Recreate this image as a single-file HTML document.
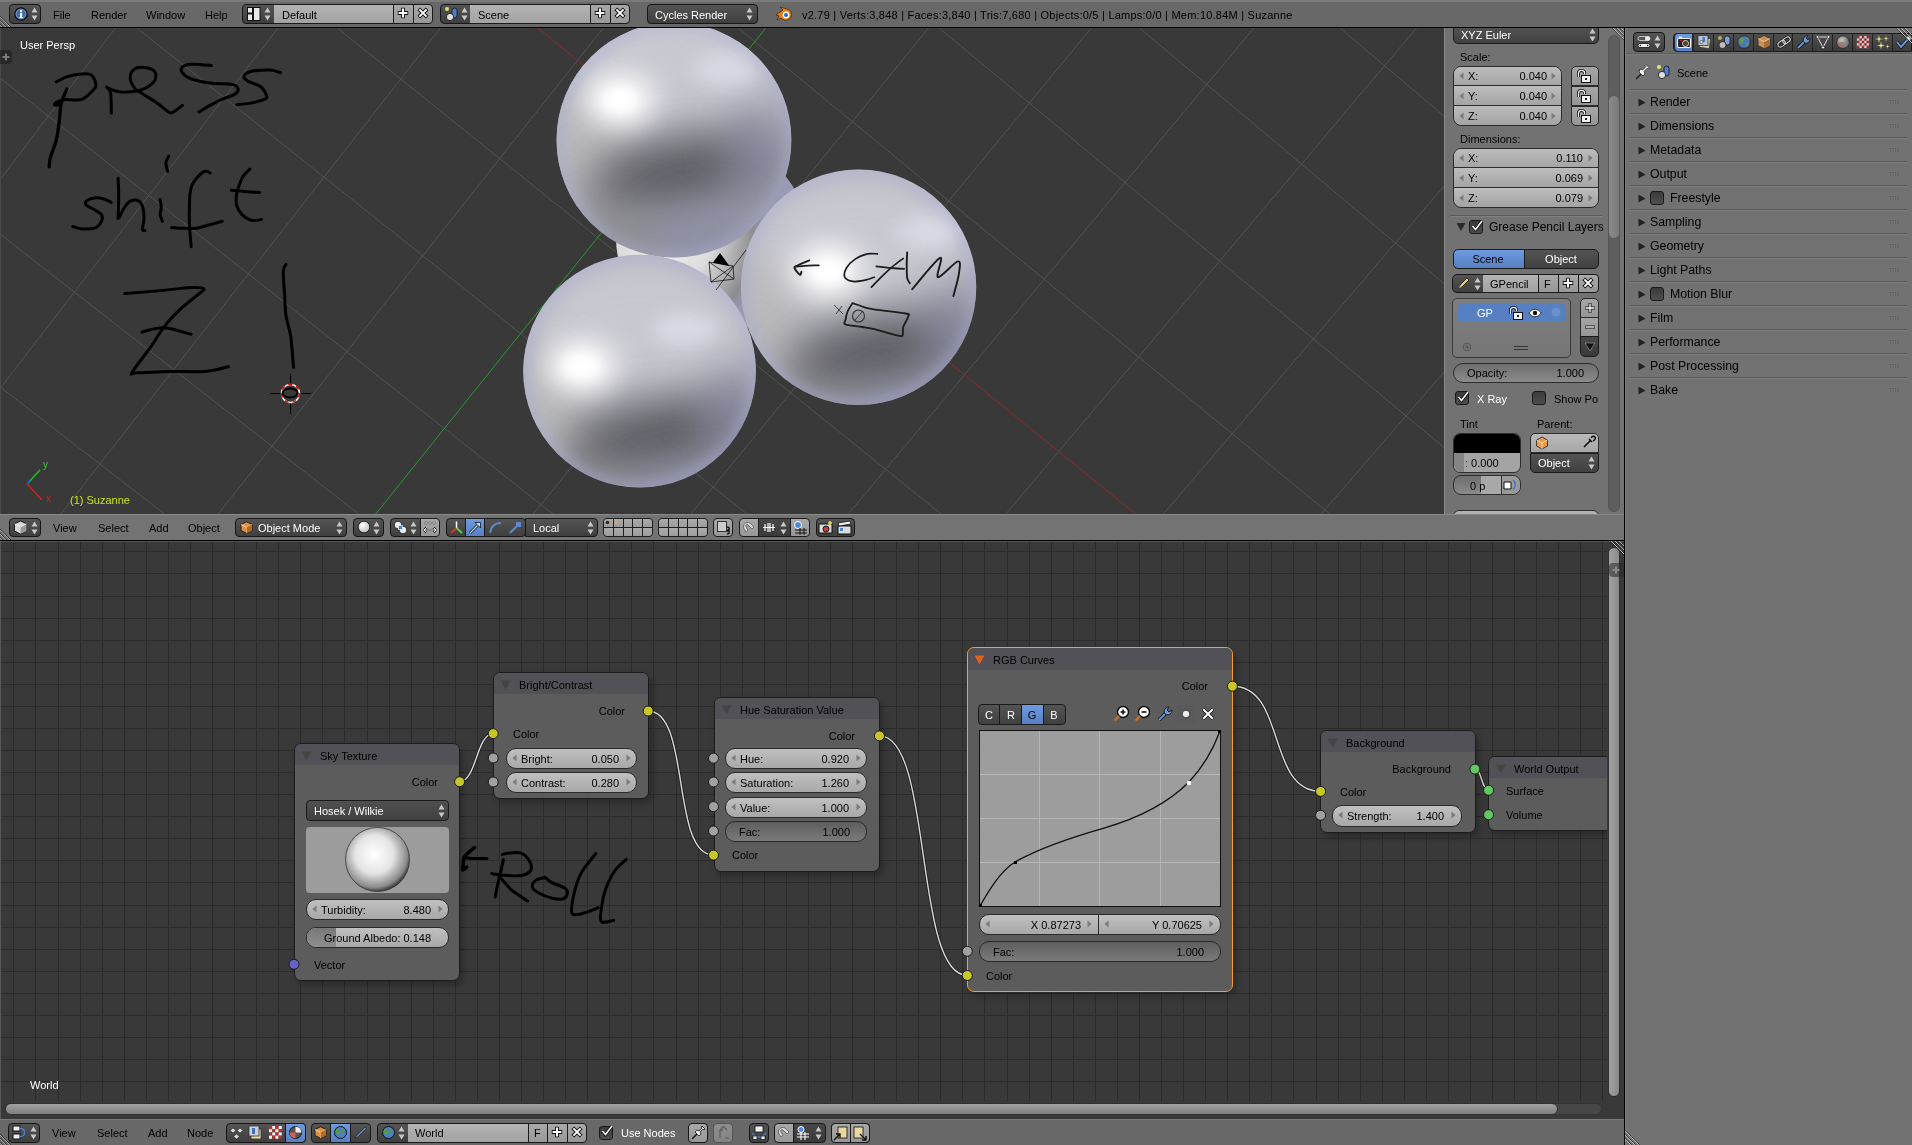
<!DOCTYPE html><html><head><meta charset="utf-8"><style>
*{margin:0;padding:0;box-sizing:border-box}
html,body{width:1912px;height:1145px;overflow:hidden;background:#727272}
body{position:relative;-webkit-font-smoothing:antialiased;font-family:"Liberation Sans",sans-serif;font-size:11px}
div{position:absolute}
.t{white-space:pre;line-height:12px;will-change:transform}
svg{position:absolute;overflow:visible}
.dk{background:linear-gradient(#535353,#414141);border:1px solid #1a1a1a;border-radius:4px}
.lt{background:linear-gradient(#b9b9b9,#a5a5a5);border:1px solid #1a1a1a}
.sl{background:linear-gradient(#bcbcbc,#a9a9a9);border:1px solid #2e2e2e;border-radius:10px}
.sld{background:linear-gradient(#6d6d6d,#888888);border:1px solid #2e2e2e;border-radius:10px}
</style></head><body><div style="left:0px;top:28px;width:1444px;height:486px;background:#393939;overflow:hidden"></div>
<svg style="position:absolute;left:0;top:0" width="1444" height="1145"><defs><clipPath id="vc"><rect x="0" y="28" width="1444" height="486"/></clipPath></defs><g clip-path="url(#vc)"><g stroke="#535353" stroke-width="1"><line x1="-3006.1" y1="1877.2" x2="1427.2" y2="-5116.6"/><line x1="-2903.3" y1="1939.3" x2="1552.3" y2="-4974.6"/><line x1="-2801.4" y1="2000.9" x2="1675.7" y2="-4834.7"/><line x1="-2700.5" y1="2062.0" x2="1797.4" y2="-4696.6"/><line x1="-2600.4" y1="2122.5" x2="1917.5" y2="-4560.3"/><line x1="-2501.3" y1="2182.5" x2="2036.0" y2="-4425.9"/><line x1="-2403.0" y1="2241.9" x2="2152.9" y2="-4293.3"/><line x1="-2305.6" y1="2300.9" x2="2268.3" y2="-4162.4"/><line x1="-2209.0" y1="2359.3" x2="2382.2" y2="-4033.2"/><line x1="-2113.3" y1="2417.1" x2="2494.6" y2="-3905.7"/><line x1="-2018.4" y1="2474.5" x2="2605.6" y2="-3779.8"/><line x1="-1924.3" y1="2531.4" x2="2715.1" y2="-3655.6"/><line x1="-1831.1" y1="2587.8" x2="2823.2" y2="-3532.9"/><line x1="-1738.6" y1="2643.7" x2="2930.0" y2="-3411.8"/><line x1="-1647.0" y1="2699.2" x2="3035.4" y2="-3292.2"/><line x1="-1556.1" y1="2754.1" x2="3139.5" y2="-3174.1"/><line x1="-1376.6" y1="2862.7" x2="3343.9" y2="-2942.3"/><line x1="-1288.0" y1="2916.3" x2="3444.2" y2="-2828.5"/><line x1="-1200.2" y1="2969.4" x2="3543.3" y2="-2716.1"/><line x1="-1113.1" y1="3022.1" x2="3641.1" y2="-2605.1"/><line x1="-1026.7" y1="3074.4" x2="3737.8" y2="-2495.4"/><line x1="-941.0" y1="3126.2" x2="3833.4" y2="-2387.0"/><line x1="-856.0" y1="3177.6" x2="3927.8" y2="-2279.9"/><line x1="-771.7" y1="3228.6" x2="4021.1" y2="-2174.1"/><line x1="-688.1" y1="3279.1" x2="4113.3" y2="-2069.5"/><line x1="-605.2" y1="3329.3" x2="4204.4" y2="-1966.2"/><line x1="-523.0" y1="3379.0" x2="4294.4" y2="-1864.0"/><line x1="-441.4" y1="3428.3" x2="4383.4" y2="-1763.0"/><line x1="-360.5" y1="3477.3" x2="4471.4" y2="-1663.2"/><line x1="-280.2" y1="3525.8" x2="4558.4" y2="-1564.5"/><line x1="-200.5" y1="3574.0" x2="4644.4" y2="-1467.0"/><line x1="-121.5" y1="3621.8" x2="4729.4" y2="-1370.5"/><line x1="-43.2" y1="3669.2" x2="4813.5" y2="-1275.2"/><line x1="34.6" y1="3716.2" x2="4896.6" y2="-1180.9"/><line x1="111.7" y1="3762.9" x2="4978.8" y2="-1087.6"/><line x1="188.3" y1="3809.2" x2="5060.1" y2="-995.4"/><line x1="-4598.0" y1="-320.6" x2="1247.1" y2="3511.8"/><line x1="-4551.6" y1="-425.0" x2="1311.6" y2="3451.8"/><line x1="-4504.5" y1="-530.8" x2="1376.9" y2="3391.3"/><line x1="-4456.9" y1="-638.1" x2="1442.7" y2="3330.2"/><line x1="-4408.6" y1="-746.7" x2="1509.3" y2="3268.4"/><line x1="-4359.6" y1="-856.9" x2="1576.5" y2="3206.0"/><line x1="-4310.0" y1="-968.6" x2="1644.4" y2="3143.0"/><line x1="-4259.6" y1="-1081.8" x2="1713.1" y2="3079.3"/><line x1="-4208.6" y1="-1196.6" x2="1782.4" y2="3014.9"/><line x1="-4156.9" y1="-1313.0" x2="1852.5" y2="2949.9"/><line x1="-4104.4" y1="-1431.1" x2="1923.3" y2="2884.2"/><line x1="-4051.2" y1="-1550.8" x2="1994.8" y2="2817.8"/><line x1="-3997.2" y1="-1672.2" x2="2067.1" y2="2750.7"/><line x1="-3942.5" y1="-1795.4" x2="2140.2" y2="2682.8"/><line x1="-3887.0" y1="-1920.4" x2="2214.1" y2="2614.3"/><line x1="-3830.6" y1="-2047.2" x2="2288.8" y2="2545.0"/><line x1="-3773.4" y1="-2175.8" x2="2364.3" y2="2474.9"/><line x1="-3715.4" y1="-2306.4" x2="2440.6" y2="2404.1"/><line x1="-3656.5" y1="-2438.9" x2="2517.7" y2="2332.5"/><line x1="-3596.7" y1="-2573.4" x2="2595.7" y2="2260.1"/><line x1="-3536.0" y1="-2710.0" x2="2674.6" y2="2186.9"/><line x1="-3474.4" y1="-2848.6" x2="2754.3" y2="2112.9"/><line x1="-3411.9" y1="-2989.4" x2="2835.0" y2="2038.1"/><line x1="-3283.8" y1="-3277.5" x2="2999.0" y2="1885.8"/><line x1="-3218.2" y1="-3425.0" x2="3082.5" y2="1808.4"/><line x1="-3151.7" y1="-3574.8" x2="3166.8" y2="1730.1"/><line x1="-3084.0" y1="-3727.1" x2="3252.2" y2="1650.9"/><line x1="-3015.3" y1="-3881.7" x2="3338.6" y2="1570.7"/><line x1="-2945.4" y1="-4038.9" x2="3425.9" y2="1489.6"/><line x1="-2874.4" y1="-4198.7" x2="3514.3" y2="1407.6"/><line x1="-2802.2" y1="-4361.1" x2="3603.8" y2="1324.6"/><line x1="-2728.8" y1="-4526.3" x2="3694.3" y2="1240.6"/><line x1="-2654.2" y1="-4694.2" x2="3785.8" y2="1155.6"/><line x1="-2578.3" y1="-4864.9" x2="3878.5" y2="1069.6"/><line x1="-2501.1" y1="-5038.6" x2="3972.3" y2="982.5"/><line x1="-2422.6" y1="-5215.3" x2="4067.3" y2="894.4"/><line x1="-2342.7" y1="-5395.1" x2="4163.4" y2="805.2"/><line x1="-2261.4" y1="-5578.0" x2="4260.7" y2="714.9"/><line x1="-2178.7" y1="-5764.1" x2="4359.2" y2="623.4"/><line x1="-2094.4" y1="-5953.6" x2="4459.0" y2="530.9"/><line x1="-2008.7" y1="-6146.5" x2="4560.0" y2="437.1"/><line x1="-1921.4" y1="-6342.9" x2="4662.3" y2="342.2"/><line x1="-1832.5" y1="-6542.9" x2="4765.9" y2="246.1"/><line x1="-1742.0" y1="-6746.7" x2="4870.8" y2="148.7"/></g><line x1="-3348.3" y1="-3132.3" x2="2916.6" y2="1962.4" stroke="#902828"/><line x1="-1466.0" y1="2808.6" x2="3242.3" y2="-3057.5" stroke="#2a9a2a"/><defs><radialGradient id="s4" cx="665" cy="238" r="105" gradientUnits="userSpaceOnUse">
<stop offset="0" stop-color="#f4f4f4"/><stop offset="0.45" stop-color="#dcdcdc"/><stop offset="0.85" stop-color="#8c8c90"/><stop offset="1" stop-color="#9a9ab8"/></radialGradient></defs>
<circle cx="712" cy="238" r="96" fill="url(#s4)"/><defs><filter id="bl1_12" x="-100%" y="-100%" width="300%" height="300%"><feGaussianBlur stdDeviation="14.1"/></filter><filter id="bl1_22" x="-100%" y="-100%" width="300%" height="300%"><feGaussianBlur stdDeviation="25.9"/></filter><filter id="bl1_20" x="-100%" y="-100%" width="300%" height="300%"><feGaussianBlur stdDeviation="23.5"/></filter><filter id="bl1_8" x="-100%" y="-100%" width="300%" height="300%"><feGaussianBlur stdDeviation="9.4"/></filter><filter id="bl1_18" x="-100%" y="-100%" width="300%" height="300%"><feGaussianBlur stdDeviation="21.1"/></filter><filter id="bl1_5" x="-100%" y="-100%" width="300%" height="300%"><feGaussianBlur stdDeviation="5.9"/></filter><clipPath id="cp1"><circle cx="674" cy="140" r="117.5"/></clipPath></defs><g clip-path="url(#cp1)"><circle cx="674" cy="140" r="117.5" fill="#a6a6ae"/><ellipse cx="674.0" cy="66.0" rx="129.2" ry="88.1" fill="#c8c8d0" opacity="1" filter="url(#bl1_22)"/><ellipse cx="574.1" cy="165.8" rx="41.1" ry="82.2" fill="#bcbcbe" opacity="0.9" filter="url(#bl1_18)"/><ellipse cx="674.0" cy="175.2" rx="88.1" ry="37.6" fill="#5c5c62" opacity="1" transform="rotate(-14 674.0 175.2)" filter="url(#bl1_20)"/><ellipse cx="756.2" cy="154.1" rx="29.4" ry="52.9" fill="#7c7e96" opacity="0.7" filter="url(#bl1_18)"/><ellipse cx="627.0" cy="236.4" rx="58.8" ry="35.2" fill="#8e8e92" opacity="0.8" filter="url(#bl1_18)"/><ellipse cx="709.2" cy="236.4" rx="58.8" ry="35.2" fill="#8a8ca4" opacity="0.8" filter="url(#bl1_18)"/><ellipse cx="725.7" cy="69.5" rx="32.9" ry="16.5" fill="#dcdce8" opacity="0.9" filter="url(#bl1_8)"/><ellipse cx="620.0" cy="100.0" rx="35.2" ry="25.9" fill="#ffffff" opacity="1" filter="url(#bl1_12)"/><ellipse cx="620.0" cy="100.0" rx="16.5" ry="11.8" fill="#ffffff" opacity="1" filter="url(#bl1_5)"/><circle cx="674" cy="140" r="117.5" fill="none" stroke="#a8acd4" stroke-width="14.1" opacity="0.4" filter="url(#bl1_5)"/></g><defs><filter id="bl2_12" x="-100%" y="-100%" width="300%" height="300%"><feGaussianBlur stdDeviation="14.0"/></filter><filter id="bl2_22" x="-100%" y="-100%" width="300%" height="300%"><feGaussianBlur stdDeviation="25.6"/></filter><filter id="bl2_20" x="-100%" y="-100%" width="300%" height="300%"><feGaussianBlur stdDeviation="23.3"/></filter><filter id="bl2_8" x="-100%" y="-100%" width="300%" height="300%"><feGaussianBlur stdDeviation="9.3"/></filter><filter id="bl2_18" x="-100%" y="-100%" width="300%" height="300%"><feGaussianBlur stdDeviation="21.0"/></filter><filter id="bl2_5" x="-100%" y="-100%" width="300%" height="300%"><feGaussianBlur stdDeviation="5.8"/></filter><clipPath id="cp2"><circle cx="639.6" cy="371.1" r="116.4"/></clipPath></defs><g clip-path="url(#cp2)"><circle cx="639.6" cy="371.1" r="116.4" fill="#a6a6ae"/><ellipse cx="639.6" cy="330.4" rx="128.0" ry="87.3" fill="#c8c8d0" opacity="1" filter="url(#bl2_22)"/><ellipse cx="540.7" cy="429.3" rx="40.7" ry="81.5" fill="#bcbcbe" opacity="0.9" filter="url(#bl2_18)"/><ellipse cx="651.2" cy="438.6" rx="87.3" ry="37.2" fill="#5c5c62" opacity="1" transform="rotate(-14 651.2 438.6)" filter="url(#bl2_20)"/><ellipse cx="732.7" cy="417.7" rx="29.1" ry="52.4" fill="#7c7e96" opacity="0.7" filter="url(#bl2_18)"/><ellipse cx="604.7" cy="499.1" rx="58.2" ry="34.9" fill="#8e8e92" opacity="0.8" filter="url(#bl2_18)"/><ellipse cx="686.2" cy="499.1" rx="58.2" ry="34.9" fill="#8a8ca4" opacity="0.8" filter="url(#bl2_18)"/><ellipse cx="685.0" cy="329.2" rx="32.6" ry="16.3" fill="#dcdce8" opacity="0.9" filter="url(#bl2_8)"/><ellipse cx="581.4" cy="366.4" rx="34.9" ry="25.6" fill="#ffffff" opacity="1" filter="url(#bl2_12)"/><ellipse cx="581.4" cy="366.4" rx="16.3" ry="11.6" fill="#ffffff" opacity="1" filter="url(#bl2_5)"/><circle cx="639.6" cy="371.1" r="116.4" fill="none" stroke="#a8acd4" stroke-width="14.0" opacity="0.4" filter="url(#bl2_5)"/></g><g stroke="#000" stroke-width="1.2" fill="none"><path d="M709,262 L733,266 L734,279 L711,282 Z M709,262 L734,279 M733,266 L711,282 M716,290 L746,250" stroke-width="0.7"/><path d="M714,262 L720,254 L728,265 Z" fill="#000"/></g><defs><filter id="bl3_12" x="-100%" y="-100%" width="300%" height="300%"><feGaussianBlur stdDeviation="14.1"/></filter><filter id="bl3_22" x="-100%" y="-100%" width="300%" height="300%"><feGaussianBlur stdDeviation="25.9"/></filter><filter id="bl3_20" x="-100%" y="-100%" width="300%" height="300%"><feGaussianBlur stdDeviation="23.5"/></filter><filter id="bl3_8" x="-100%" y="-100%" width="300%" height="300%"><feGaussianBlur stdDeviation="9.4"/></filter><filter id="bl3_18" x="-100%" y="-100%" width="300%" height="300%"><feGaussianBlur stdDeviation="21.2"/></filter><filter id="bl3_5" x="-100%" y="-100%" width="300%" height="300%"><feGaussianBlur stdDeviation="5.9"/></filter><clipPath id="cp3"><circle cx="858.6" cy="287.2" r="117.7"/></clipPath></defs><g clip-path="url(#cp3)"><circle cx="858.6" cy="287.2" r="117.7" fill="#a6a6ae"/><ellipse cx="858.6" cy="246.0" rx="129.5" ry="88.3" fill="#c8c8d0" opacity="1" filter="url(#bl3_22)"/><ellipse cx="758.6" cy="346.1" rx="41.2" ry="82.4" fill="#bcbcbe" opacity="0.9" filter="url(#bl3_18)"/><ellipse cx="872.7" cy="355.5" rx="88.3" ry="37.7" fill="#5c5c62" opacity="1" transform="rotate(-14 872.7 355.5)" filter="url(#bl3_20)"/><ellipse cx="955.1" cy="334.3" rx="29.4" ry="53.0" fill="#7c7e96" opacity="0.7" filter="url(#bl3_18)"/><ellipse cx="825.6" cy="416.7" rx="58.9" ry="35.3" fill="#8e8e92" opacity="0.8" filter="url(#bl3_18)"/><ellipse cx="908.0" cy="416.7" rx="58.9" ry="35.3" fill="#8a8ca4" opacity="0.8" filter="url(#bl3_18)"/><ellipse cx="929.2" cy="231.9" rx="33.0" ry="16.5" fill="#dcdce8" opacity="0.9" filter="url(#bl3_8)"/><ellipse cx="828.0" cy="270.7" rx="35.3" ry="25.9" fill="#ffffff" opacity="1" filter="url(#bl3_12)"/><ellipse cx="828.0" cy="270.7" rx="16.5" ry="11.8" fill="#ffffff" opacity="1" filter="url(#bl3_5)"/><circle cx="858.6" cy="287.2" r="117.7" fill="none" stroke="#a8acd4" stroke-width="14.1" opacity="0.4" filter="url(#bl3_5)"/></g><path d="M56.3,81.8 C58.2,80.9 63.2,77.9 67.5,76.6 C71.7,75.3 77.8,74.2 81.8,74.0 C85.9,73.7 89.3,73.4 91.6,75.3 C94.0,77.1 95.9,82.5 96.0,85.1 C96.1,87.7 94.4,88.7 92.3,91.0 C90.2,93.2 86.0,97.3 83.1,98.8 C80.3,100.3 78.4,100.0 75.3,100.1 C72.3,100.2 68.1,99.0 64.8,99.5 C61.6,99.9 57.3,101.7 55.7,102.7 C54.1,103.7 54.4,105.1 55.0,105.3 C55.7,105.6 58.9,104.3 59.6,104.0" stroke="#000" stroke-width="3.0" fill="none" stroke-linecap="round" stroke-linejoin="round"/><path d="M66.8,89.0 C66.3,90.3 64.5,94.2 63.5,96.8 C62.6,99.5 61.6,100.8 60.9,104.7 C60.2,108.6 60.1,114.5 59.4,120.4 C58.6,126.3 57.8,133.9 56.3,140.0 C54.9,146.1 51.7,152.5 50.5,157.0 C49.3,161.5 49.4,165.2 49.2,166.8" stroke="#000" stroke-width="3.3" fill="none" stroke-linecap="round" stroke-linejoin="round"/><path d="M106.7,87.0 C107.3,88.0 109.8,88.6 110.6,92.9 C111.4,97.3 111.2,109.8 111.3,113.2" stroke="#000" stroke-width="3.0" fill="none" stroke-linecap="round" stroke-linejoin="round"/><path d="M108.0,88.3 C110.0,88.9 114.9,91.4 119.8,91.9 C124.7,92.3 132.6,91.9 137.4,91.0 C142.2,90.0 145.6,88.2 148.5,86.4 C151.5,84.5 154.1,82.3 155.1,79.8 C156.0,77.3 156.2,73.4 154.4,71.3 C152.7,69.3 148.0,67.7 144.6,67.4 C141.2,67.1 136.5,67.5 134.1,69.4 C131.7,71.2 130.0,75.3 130.2,78.5 C130.4,81.8 133.3,86.4 135.4,89.0 C137.6,91.6 139.6,91.8 143.3,94.2 C147.0,96.6 153.3,100.3 157.7,103.4 C162.0,106.4 166.6,111.2 169.4,112.5 C172.3,113.8 172.5,112.4 174.7,111.2 C176.9,110.0 181.2,106.3 182.5,105.3" stroke="#000" stroke-width="3.0" fill="none" stroke-linecap="round" stroke-linejoin="round"/><path d="M211.3,65.5 C208.0,65.2 196.5,63.9 191.7,64.2 C186.9,64.4 184.2,65.5 182.5,66.8 C180.9,68.1 180.6,70.0 181.9,72.0 C183.2,74.0 185.7,76.7 190.4,78.5 C195.1,80.4 203.0,82.1 210.0,83.1 C217.0,84.1 227.5,83.4 232.2,84.4 C236.9,85.4 237.7,87.4 238.1,89.0 C238.5,90.6 237.5,92.5 234.8,94.2 C232.1,96.0 225.9,97.6 221.7,99.5 C217.6,101.3 213.8,103.3 210.0,105.3 C206.2,107.4 200.7,110.8 198.9,111.9" stroke="#000" stroke-width="3.0" fill="none" stroke-linecap="round" stroke-linejoin="round"/><path d="M280.6,72.7 C278.8,72.2 274.9,70.3 270.1,70.0 C265.3,69.8 256.2,70.4 251.8,71.3 C247.5,72.3 244.6,74.3 244.0,75.9 C243.3,77.6 245.1,79.3 247.9,81.2 C250.7,83.0 257.8,84.4 261.0,87.0 C264.1,89.6 266.6,94.7 266.9,96.8 C267.1,99.0 265.2,99.0 262.3,100.1 C259.3,101.2 253.5,102.6 249.2,103.4 C245.0,104.1 238.9,104.5 236.8,104.7" stroke="#000" stroke-width="3.0" fill="none" stroke-linecap="round" stroke-linejoin="round"/><path d="M111.2,202.4 C110.0,201.8 106.3,199.7 103.7,198.9 C101.1,198.1 98.4,197.5 95.7,197.8 C92.9,198.0 88.7,199.5 87.0,200.6 C85.4,201.8 84.6,203.1 85.9,204.7 C87.1,206.2 91.9,208.2 94.5,209.8 C97.1,211.5 100.3,212.5 101.4,214.4 C102.6,216.4 102.6,219.0 101.4,221.3 C100.3,223.6 98.0,227.0 94.5,228.2 C91.1,229.5 84.4,229.1 80.7,228.8 C77.1,228.5 74.0,226.9 72.7,226.5" stroke="#000" stroke-width="3.0" fill="none" stroke-linecap="round" stroke-linejoin="round"/><path d="M118.1,178.2 C118.2,181.2 118.7,189.3 118.7,196.0 C118.7,202.7 118.2,214.7 118.1,218.5" stroke="#000" stroke-width="3.0" fill="none" stroke-linecap="round" stroke-linejoin="round"/><path d="M119.3,217.3 C120.1,215.7 122.6,210.2 124.4,207.5 C126.3,204.8 127.9,202.4 130.2,201.2 C132.5,200.1 136.1,199.6 138.2,200.6 C140.4,201.7 141.9,204.5 142.8,207.5 C143.8,210.6 144.1,215.4 144.0,219.0 C143.9,222.7 142.1,227.5 142.3,229.4 C142.5,231.3 144.7,230.4 145.1,230.5" stroke="#000" stroke-width="3.0" fill="none" stroke-linecap="round" stroke-linejoin="round"/><path d="M168.7,156.3 C168.3,157.4 166.0,160.2 165.9,162.7 C165.7,165.1 167.3,169.8 167.6,171.3" stroke="#000" stroke-width="3.0" fill="none" stroke-linecap="round" stroke-linejoin="round"/><path d="M160.1,199.5 C160.3,200.8 161.3,205.0 161.3,207.5 C161.3,210.0 159.9,212.1 160.1,214.4 C160.3,216.7 162.0,220.2 162.4,221.3" stroke="#000" stroke-width="3.0" fill="none" stroke-linecap="round" stroke-linejoin="round"/><path d="M210.2,173.0 C209.3,172.7 207.0,170.7 205.0,171.3 C203.0,171.9 200.2,174.3 198.1,176.5 C196.0,178.7 193.7,181.6 192.3,184.5 C191.0,187.4 190.5,189.9 190.0,193.7 C189.5,197.6 189.5,202.4 189.4,207.5 C189.3,212.7 189.2,218.3 189.4,224.8 C189.7,231.3 190.9,243.0 191.2,246.7" stroke="#000" stroke-width="3.0" fill="none" stroke-linecap="round" stroke-linejoin="round"/><path d="M171.6,227.7 C173.1,227.8 176.8,228.1 180.8,228.2 C184.8,228.3 191.0,228.8 195.8,228.2 C200.6,227.7 205.2,225.9 209.6,224.8 C214.0,223.6 220.1,221.9 222.2,221.3" stroke="#000" stroke-width="3.0" fill="none" stroke-linecap="round" stroke-linejoin="round"/><path d="M249.9,169.0 C248.7,170.2 244.7,173.9 242.9,176.5 C241.2,179.1 240.6,181.6 239.5,184.5 C238.4,187.4 237.1,190.3 236.6,193.7 C236.1,197.2 235.8,201.8 236.6,205.2 C237.5,208.7 239.4,211.9 241.8,214.4 C244.2,216.9 247.7,219.3 251.0,220.2 C254.3,221.1 259.6,219.7 261.4,219.6" stroke="#000" stroke-width="3.0" fill="none" stroke-linecap="round" stroke-linejoin="round"/><path d="M231.4,190.3 C233.6,190.5 239.4,191.0 244.1,191.4 C248.8,191.8 257.0,192.4 259.6,192.6" stroke="#000" stroke-width="3.0" fill="none" stroke-linecap="round" stroke-linejoin="round"/><path d="M124.9,293.6 C130.3,293.1 146.3,291.9 157.4,290.9 C168.4,289.9 183.4,287.8 191.2,287.5 C199.0,287.2 203.2,287.5 204.1,288.8 C205.0,290.2 200.6,292.2 196.7,295.6 C192.7,299.0 185.8,304.0 180.4,309.2 C175.0,314.3 169.1,320.4 164.2,326.8 C159.2,333.1 155.9,339.5 150.6,347.1 C145.3,354.6 134.6,367.8 132.3,372.1 C130.1,376.4 130.6,372.9 137.1,372.8 C143.5,372.7 159.6,371.7 170.9,371.4 C182.2,371.2 195.2,372.2 204.8,371.4 C214.4,370.6 224.5,367.5 228.5,366.7" stroke="#000" stroke-width="3.0" fill="none" stroke-linecap="round" stroke-linejoin="round"/><path d="M141.8,332.2 C144.0,331.6 150.5,329.5 154.7,328.8 C158.9,328.1 160.8,327.2 166.9,328.1 C173.0,329.0 187.2,333.2 191.2,334.2" stroke="#000" stroke-width="3.0" fill="none" stroke-linecap="round" stroke-linejoin="round"/><path d="M286.0,264.5 C285.6,265.6 283.5,266.1 283.3,271.2 C283.1,276.4 284.2,288.2 284.7,295.6 C285.1,303.1 285.0,309.2 286.0,315.9 C287.0,322.7 289.5,327.7 290.7,336.2 C292.0,344.8 293.0,362.2 293.5,367.4" stroke="#000" stroke-width="3.0" fill="none" stroke-linecap="round" stroke-linejoin="round"/><path d="M818.8,265.3 C816.4,265.4 808.8,265.6 804.8,265.8 C800.9,266.1 796.6,266.7 794.9,266.8" stroke="#1c1c1c" stroke-width="1.7" fill="none" stroke-linecap="round" stroke-linejoin="round"/><path d="M809.3,260.4 C807.4,261.2 800.4,264.1 797.9,265.3 C795.4,266.6 794.1,266.3 794.4,267.8 C794.7,269.4 798.7,274.1 799.9,274.8 C801.0,275.4 801.1,272.3 801.4,271.8" stroke="#1c1c1c" stroke-width="1.9" fill="none" stroke-linecap="round" stroke-linejoin="round"/><path d="M877.4,253.9 C875.7,253.9 871.1,253.1 867.4,253.9 C863.8,254.7 859.0,256.6 855.5,258.9 C852.0,261.2 848.4,264.8 846.6,267.8 C844.8,270.8 843.8,274.5 844.6,276.8 C845.4,279.0 848.6,280.6 851.5,281.2 C854.5,281.9 858.7,281.4 862.5,280.7 C866.3,280.1 872.4,277.8 874.4,277.3" stroke="#1c1c1c" stroke-width="1.7" fill="none" stroke-linecap="round" stroke-linejoin="round"/><path d="M871.4,287.2 C873.1,285.5 877.9,280.2 881.4,276.8 C884.8,273.4 888.6,269.9 892.3,266.8 C895.9,263.8 901.4,259.8 903.2,258.4" stroke="#1c1c1c" stroke-width="1.7" fill="none" stroke-linecap="round" stroke-linejoin="round"/><path d="M876.4,266.3 C878.5,266.6 884.7,267.4 889.3,267.8 C893.9,268.2 901.7,268.7 904.2,268.8" stroke="#1c1c1c" stroke-width="1.7" fill="none" stroke-linecap="round" stroke-linejoin="round"/><path d="M907.2,252.4 C907.1,254.5 906.7,260.6 906.7,264.8 C906.7,269.1 906.7,274.7 907.2,277.8 C907.7,280.8 909.3,282.3 909.7,283.2" stroke="#1c1c1c" stroke-width="1.9" fill="none" stroke-linecap="round" stroke-linejoin="round"/><path d="M912.2,289.2 C916.8,284.0 935.7,259.9 940.0,257.9 C944.3,255.9 935.0,276.7 938.0,277.3 C941.0,277.8 954.4,261.9 957.9,261.4 C961.4,260.8 959.6,268.0 958.9,273.8 C958.1,279.6 954.3,292.4 953.4,296.1" stroke="#1c1c1c" stroke-width="1.9" fill="none" stroke-linecap="round" stroke-linejoin="round"/><path d="M852.5,303.1 C854.7,303.8 861.7,306.5 865.5,307.6 C869.3,308.7 868.7,308.6 875.4,309.6 C882.1,310.6 900.2,312.4 905.7,313.5 C911.2,314.7 908.6,314.3 908.2,316.5 C907.8,318.8 904.2,323.7 903.2,327.0 C902.2,330.2 903.9,334.7 902.2,335.9 C900.6,337.1 897.8,335.5 893.3,334.4 C888.8,333.3 880.5,330.7 875.4,329.4 C870.3,328.2 867.4,327.8 862.5,327.0 C857.5,326.1 848.4,325.7 845.6,324.5 C842.8,323.2 845.3,321.7 845.6,319.5 C845.9,317.3 846.4,314.3 847.6,311.5 C848.7,308.8 851.7,304.5 852.5,303.1" stroke="#1c1c1c" stroke-width="1.8" fill="none" stroke-linecap="round" stroke-linejoin="round"/><circle cx="858.5" cy="316" r="6" stroke="#333" stroke-width="1.1" fill="none"/><path d="M855,320 L862,312 M834,305 L843,314 M836,314 L842,306" stroke="#333" stroke-width="0.9"/><g><path d="M270,393.5 L282,393.5 M299,393.5 L311,393.5 M290.5,374 L290.5,385 M290.5,402 L290.5,414" stroke="#000" stroke-width="1"/><circle cx="290.5" cy="393.5" r="9" stroke="#ffffff" stroke-width="1.5" fill="none"/><circle cx="290.5" cy="393.5" r="9" stroke="#e00000" stroke-width="1.5" fill="none" stroke-dasharray="4 4"/><ellipse cx="290" cy="393" rx="7.5" ry="4.5" stroke="#000" stroke-width="2" fill="none"/></g></g></svg>
<div class="t" style="left:20px;top:39px;color:#ffffff;font-size:11px;">User Persp</div>
<div class="t" style="left:70px;top:494px;color:#c8e020;font-size:11px;">(1) Suzanne</div>
<div style="left:0px;top:28px;width:1px;height:486px;background:#4a4a4a"></div>
<div style="left:0px;top:50px;width:12px;height:14px;background:rgba(30,30,30,0.6);border-radius:0 4px 4px 0"></div>
<svg style="position:absolute;left:2px;top:53px;" width="8" height="8" viewBox="0 0 8 8"><path d="M4,0.5 V7.5 M0.5,4 H7.5" stroke="#7a7a7a" stroke-width="2"/></svg>
<svg style="position:absolute;left:0px;top:0px;" width="60" height="520" viewBox="0 0 60 520"><path d="M27,484 L42,500" stroke="#d02020" stroke-width="1.5"/><path d="M27,484 L40,470" stroke="#20c020" stroke-width="1.5"/><path d="M27,484 L29,480" stroke="#2040e0" stroke-width="1.5"/><text x="46" y="502" fill="#d02020" font-size="10" font-family="Liberation Sans">x</text><text x="43" y="468" fill="#30d030" font-size="10" font-family="Liberation Sans">y</text></svg>
<div style="left:1444px;top:28px;width:180px;height:486px;background:#727272;border-left:1px solid #8a8a8a"></div>
<div style="left:1444px;top:28px;width:180px;height:486px;overflow:hidden"></div>
<div style="left:1453px;top:24px;width:146px;height:20px;background:linear-gradient(#545454,#424242);border:1px solid #1a1a1a;border-radius:5px"></div>
<div style="left:1444px;top:24px;width:180px;height:4px;background:#727272"></div>
<div class="t" style="left:1461px;top:29px;color:#fff;font-size:11px;">XYZ Euler</div>
<svg style="position:absolute;left:1589px;top:28px;" width="7" height="14" viewBox="0 0 7 14"><path d="M0.5,5.5 L3.5,0.5 L6.5,5.5 Z M0.5,8.5 L3.5,13.5 L6.5,8.5 Z" fill="#c8c8c8"/></svg>
<div class="t" style="left:1460px;top:51px;color:#000;font-size:11px;">Scale:</div>
<div style="left:1453px;top:66px;width:109px;height:60px;background:#a4a4a4;border:1px solid #2a2a2a;border-radius:8px;overflow:hidden"></div>
<div style="left:1454px;top:67px;width:107px;height:19px;background:linear-gradient(#bdbdbd,#a4a4a4);border-radius:7px 7px 0 0;"></div>
<svg style="position:absolute;left:1459px;top:72px;" width="5" height="8" viewBox="0 0 5 8"><path d="M4.5,0.5 L0.5,4 L4.5,7.5 Z" fill="#7a7a7a"/></svg>
<svg style="position:absolute;left:1551px;top:72px;" width="5" height="8" viewBox="0 0 5 8"><path d="M0.5,0.5 L4.5,4 L0.5,7.5 Z" fill="#7a7a7a"/></svg>
<div class="t" style="left:1468px;top:70px;color:#000;font-size:11px;">X:</div>
<div class="t" style="left:1147px;top:70px;width:400px;text-align:right;color:#000;font-size:11px;">0.040</div>
<div style="left:1454px;top:86px;width:107px;height:19px;background:linear-gradient(#bdbdbd,#a4a4a4);"></div>
<div style="left:1454px;top:85px;width:107px;height:1px;background:#2e2e2e"></div>
<svg style="position:absolute;left:1459px;top:92px;" width="5" height="8" viewBox="0 0 5 8"><path d="M4.5,0.5 L0.5,4 L4.5,7.5 Z" fill="#7a7a7a"/></svg>
<svg style="position:absolute;left:1551px;top:92px;" width="5" height="8" viewBox="0 0 5 8"><path d="M0.5,0.5 L4.5,4 L0.5,7.5 Z" fill="#7a7a7a"/></svg>
<div class="t" style="left:1468px;top:90px;color:#000;font-size:11px;">Y:</div>
<div class="t" style="left:1147px;top:90px;width:400px;text-align:right;color:#000;font-size:11px;">0.040</div>
<div style="left:1454px;top:106px;width:107px;height:18px;background:linear-gradient(#bdbdbd,#a4a4a4);border-radius:0 0 7px 7px;"></div>
<div style="left:1454px;top:105px;width:107px;height:1px;background:#2e2e2e"></div>
<svg style="position:absolute;left:1459px;top:112px;" width="5" height="8" viewBox="0 0 5 8"><path d="M4.5,0.5 L0.5,4 L4.5,7.5 Z" fill="#7a7a7a"/></svg>
<svg style="position:absolute;left:1551px;top:112px;" width="5" height="8" viewBox="0 0 5 8"><path d="M0.5,0.5 L4.5,4 L0.5,7.5 Z" fill="#7a7a7a"/></svg>
<div class="t" style="left:1468px;top:110px;color:#000;font-size:11px;">Z:</div>
<div class="t" style="left:1147px;top:110px;width:400px;text-align:right;color:#000;font-size:11px;">0.040</div>
<div style="left:1571px;top:66px;width:28px;height:20px;background:linear-gradient(#a6a6a6,#959595);border:1px solid #2a2a2a;border-radius:5px 5px 0 0;"></div>
<svg style="position:absolute;left:1576px;top:68px;" width="16" height="16" viewBox="0 0 16 16"><path d="M2.5,9 V5 C2.5,1.5 8.5,1.5 8.5,5 V6" stroke="#111" stroke-width="3" fill="none"/><path d="M2.5,9 V5 C2.5,1.5 8.5,1.5 8.5,5 V6" stroke="#f4f4f4" stroke-width="1.3" fill="none"/><rect x="5.5" y="7.5" width="9" height="7" fill="#f0f0f0" stroke="#111"/><rect x="9" y="10" width="2" height="2" fill="#222"/></svg>
<div style="left:1571px;top:86px;width:28px;height:20px;background:linear-gradient(#a6a6a6,#959595);border:1px solid #2a2a2a;"></div>
<svg style="position:absolute;left:1576px;top:88px;" width="16" height="16" viewBox="0 0 16 16"><path d="M2.5,9 V5 C2.5,1.5 8.5,1.5 8.5,5 V6" stroke="#111" stroke-width="3" fill="none"/><path d="M2.5,9 V5 C2.5,1.5 8.5,1.5 8.5,5 V6" stroke="#f4f4f4" stroke-width="1.3" fill="none"/><rect x="5.5" y="7.5" width="9" height="7" fill="#f0f0f0" stroke="#111"/><rect x="9" y="10" width="2" height="2" fill="#222"/></svg>
<div style="left:1571px;top:106px;width:28px;height:20px;background:linear-gradient(#a6a6a6,#959595);border:1px solid #2a2a2a;border-radius:0 0 5px 5px;"></div>
<svg style="position:absolute;left:1576px;top:108px;" width="16" height="16" viewBox="0 0 16 16"><path d="M2.5,9 V5 C2.5,1.5 8.5,1.5 8.5,5 V6" stroke="#111" stroke-width="3" fill="none"/><path d="M2.5,9 V5 C2.5,1.5 8.5,1.5 8.5,5 V6" stroke="#f4f4f4" stroke-width="1.3" fill="none"/><rect x="5.5" y="7.5" width="9" height="7" fill="#f0f0f0" stroke="#111"/><rect x="9" y="10" width="2" height="2" fill="#222"/></svg>
<div class="t" style="left:1460px;top:133px;color:#000;font-size:11px;">Dimensions:</div>
<div style="left:1453px;top:148px;width:146px;height:60px;background:#a4a4a4;border:1px solid #2a2a2a;border-radius:8px;overflow:hidden"></div>
<div style="left:1454px;top:149px;width:144px;height:19px;background:linear-gradient(#bdbdbd,#a4a4a4);border-radius:7px 7px 0 0;"></div>
<svg style="position:absolute;left:1459px;top:154px;" width="5" height="8" viewBox="0 0 5 8"><path d="M4.5,0.5 L0.5,4 L4.5,7.5 Z" fill="#7a7a7a"/></svg>
<svg style="position:absolute;left:1588px;top:154px;" width="5" height="8" viewBox="0 0 5 8"><path d="M0.5,0.5 L4.5,4 L0.5,7.5 Z" fill="#7a7a7a"/></svg>
<div class="t" style="left:1468px;top:152px;color:#000;font-size:11px;">X:</div>
<div class="t" style="left:1183px;top:152px;width:400px;text-align:right;color:#000;font-size:11px;">0.110</div>
<div style="left:1454px;top:168px;width:144px;height:19px;background:linear-gradient(#bdbdbd,#a4a4a4);"></div>
<div style="left:1454px;top:167px;width:144px;height:1px;background:#2e2e2e"></div>
<svg style="position:absolute;left:1459px;top:174px;" width="5" height="8" viewBox="0 0 5 8"><path d="M4.5,0.5 L0.5,4 L4.5,7.5 Z" fill="#7a7a7a"/></svg>
<svg style="position:absolute;left:1588px;top:174px;" width="5" height="8" viewBox="0 0 5 8"><path d="M0.5,0.5 L4.5,4 L0.5,7.5 Z" fill="#7a7a7a"/></svg>
<div class="t" style="left:1468px;top:172px;color:#000;font-size:11px;">Y:</div>
<div class="t" style="left:1183px;top:172px;width:400px;text-align:right;color:#000;font-size:11px;">0.069</div>
<div style="left:1454px;top:188px;width:144px;height:18px;background:linear-gradient(#bdbdbd,#a4a4a4);border-radius:0 0 7px 7px;"></div>
<div style="left:1454px;top:187px;width:144px;height:1px;background:#2e2e2e"></div>
<svg style="position:absolute;left:1459px;top:194px;" width="5" height="8" viewBox="0 0 5 8"><path d="M4.5,0.5 L0.5,4 L4.5,7.5 Z" fill="#7a7a7a"/></svg>
<svg style="position:absolute;left:1588px;top:194px;" width="5" height="8" viewBox="0 0 5 8"><path d="M0.5,0.5 L4.5,4 L0.5,7.5 Z" fill="#7a7a7a"/></svg>
<div class="t" style="left:1468px;top:192px;color:#000;font-size:11px;">Z:</div>
<div class="t" style="left:1183px;top:192px;width:400px;text-align:right;color:#000;font-size:11px;">0.079</div>
<div style="left:1450px;top:215px;width:152px;height:1px;background:#5a5a5a"></div>
<div style="left:1450px;top:216px;width:152px;height:1px;background:#808080"></div>
<svg style="position:absolute;left:1456px;top:222px;" width="10" height="10" viewBox="0 0 10 10"><path d="M0.5,1 L9.5,1 L5,9 Z" fill="#2a2a2a"/></svg>
<div style="left:1469px;top:220px;width:14px;height:14px;background:linear-gradient(#3a3a3a,#4e4e4e);border:1px solid #1a1a1a;border-radius:3px"></div><svg style="position:absolute;left:1470px;top:219px;" width="14" height="14" viewBox="0 0 14 14"><path d="M2.5,7 L5.5,10.5 L12,2" stroke="#111" stroke-width="3" fill="none"/><path d="M2.5,7 L5.5,10.5 L12,2" stroke="#fff" stroke-width="1.5" fill="none"/></svg>
<div class="t" style="left:1489px;top:221px;color:#000;font-size:12px;">Grease Pencil Layers</div>
<div style="left:1453px;top:249px;width:72px;height:20px;background:linear-gradient(#6f9ae0,#5680c2);border:1px solid #1a1a1a;border-radius:5px 0 0 5px"></div>
<div style="left:1524px;top:249px;width:75px;height:20px;background:linear-gradient(#545454,#404040);border:1px solid #1a1a1a;border-radius:0 5px 5px 0"></div>
<div class="t" style="left:1458.0px;top:253px;width:60px;text-align:center;color:#000;font-size:11px;">Scene</div>
<div class="t" style="left:1531.0px;top:253px;width:60px;text-align:center;color:#fff;font-size:11px;">Object</div>
<div style="left:1452px;top:274px;width:32px;height:19px;background:linear-gradient(#545454,#3f3f3f);border:1px solid #161616;border-radius:4px;border-radius:5px 0 0 5px"></div>
<svg style="position:absolute;left:1457px;top:276px;" width="14" height="14" viewBox="0 0 14 14"><path d="M2,12 L3,9 L10,2 L12,4 L5,11 Z" fill="#e0d060" stroke="#111" stroke-width="0.8"/><path d="M2,12 L3,9 L5,11 Z" fill="#d0b080"/></svg>
<svg style="position:absolute;left:1474px;top:277px;" width="7" height="14" viewBox="0 0 7 14"><path d="M0.5,5.5 L3.5,0.5 L6.5,5.5 Z M0.5,8.5 L3.5,13.5 L6.5,8.5 Z" fill="#c8c8c8"/></svg>
<div style="left:1483px;top:274px;width:56px;height:19px;background:linear-gradient(#b4b4b4,#a2a2a2);border:1px solid #1a1a1a;border-left:none"></div>
<div class="t" style="left:1490px;top:278px;color:#000;font-size:11px;">GPencil</div>
<div style="left:1538px;top:274px;width:21px;height:19px;background:linear-gradient(#a8a8a8,#989898);border:1px solid #1a1a1a"></div>
<div class="t" style="left:1544px;top:278px;color:#000;font-size:11px;">F</div>
<div style="left:1558px;top:274px;width:21px;height:19px;background:linear-gradient(#a8a8a8,#989898);border:1px solid #1a1a1a"></div><svg style="position:absolute;left:1562px;top:277px;" width="12" height="12" viewBox="0 0 12 12"><path d="M6,0.8 V11.2 M0.8,6 H11.2" stroke="#111" stroke-width="3.8"/><path d="M6,1.6 V10.4 M1.6,6 H10.4" stroke="#fff" stroke-width="2"/></svg>
<div style="left:1578px;top:274px;width:21px;height:19px;background:linear-gradient(#a8a8a8,#989898);border:1px solid #1a1a1a;border-radius:0 4px 4px 0;"></div><svg style="position:absolute;left:1582px;top:277px;" width="12" height="12" viewBox="0 0 12 12"><path d="M1.8,1.8 L10.2,10.2 M10.2,1.8 L1.8,10.2" stroke="#111" stroke-width="3.8"/><path d="M2.4,2.4 L9.6,9.6 M9.6,2.4 L2.4,9.6" stroke="#fff" stroke-width="2"/></svg>
<div style="left:1452px;top:298px;width:119px;height:60px;background:linear-gradient(#7e7e7e,#767676);border:1px solid #3a3a3a;border-radius:5px"></div>
<div style="left:1458px;top:304px;width:107px;height:18px;background:#5680c2;border-radius:3px"></div>
<div class="t" style="left:1465.0px;top:307px;width:40px;text-align:center;color:#fff;font-size:11px;">GP</div>
<svg style="position:absolute;left:1508px;top:305px;" width="16" height="16" viewBox="0 0 16 16"><path d="M2.5,9 V5 C2.5,1.5 8.5,1.5 8.5,5 V6" stroke="#111" stroke-width="3" fill="none"/><path d="M2.5,9 V5 C2.5,1.5 8.5,1.5 8.5,5 V6" stroke="#f4f4f4" stroke-width="1.3" fill="none"/><rect x="5.5" y="7.5" width="9" height="7" fill="#f0f0f0" stroke="#111"/><rect x="9" y="10" width="2" height="2" fill="#222"/></svg>
<svg style="position:absolute;left:1528px;top:307px;" width="14" height="12" viewBox="0 0 14 12"><path d="M1,6 C4,1 10,1 13,6 C10,11 4,11 1,6 Z" fill="#fff" stroke="#111" stroke-width="0.8"/><circle cx="7" cy="6" r="2.2" fill="#111"/></svg>
<svg style="position:absolute;left:1550px;top:306px;" width="12" height="12" viewBox="0 0 12 12"><circle cx="6" cy="6" r="4.5" fill="#7aa0d0" opacity="0.6"/></svg>
<svg style="position:absolute;left:1462px;top:342px;" width="10" height="10" viewBox="0 0 10 10"><circle cx="5" cy="5" r="3.8" fill="none" stroke="#555" stroke-width="1"/><path d="M5,3 V7 M3,5 H7" stroke="#555"/></svg>
<div style="left:1514px;top:346px;width:14px;height:1px;background:#333"></div>
<div style="left:1514px;top:349px;width:14px;height:1px;background:#333"></div>
<div style="left:1580px;top:298px;width:19px;height:20px;background:linear-gradient(#a6a6a6,#969696);border:1px solid #2a2a2a;border-radius:5px 5px 0 0"></div>
<svg style="position:absolute;left:1584px;top:302px;" width="12" height="12" viewBox="0 0 12 12"><path d="M6,1 V11 M1,6 H11" stroke="#111" stroke-width="3"/><path d="M6,1.5 V10.5 M1.5,6 H10.5" stroke="#fff" stroke-width="1.3"/></svg>
<div style="left:1580px;top:317px;width:19px;height:20px;background:linear-gradient(#a6a6a6,#969696);border:1px solid #2a2a2a"></div>
<svg style="position:absolute;left:1584px;top:321px;" width="12" height="12" viewBox="0 0 12 12"><path d="M1,6 H11" stroke="#111" stroke-width="3"/><path d="M1.5,6 H10.5" stroke="#fff" stroke-width="1.3"/></svg>
<div style="left:1580px;top:336px;width:19px;height:21px;background:linear-gradient(#474747,#3a3a3a);border:1px solid #1a1a1a;border-radius:0 0 5px 5px"></div>
<svg style="position:absolute;left:1584px;top:342px;" width="12" height="10" viewBox="0 0 12 10"><path d="M1,1 L11,1 L6,9 Z" fill="#111" stroke="#aaa" stroke-width="0.6"/></svg>
<div style="left:1453px;top:363px;width:146px;height:20px;background:linear-gradient(#6e6e6e,#8a8a8a);border:1px solid #2e2e2e;border-radius:10px"></div>
<div class="t" style="left:1467px;top:367px;color:#000;font-size:11px;">Opacity:</div>
<div class="t" style="left:1184px;top:367px;width:400px;text-align:right;color:#000;font-size:11px;">1.000</div>
<div style="left:1455px;top:391px;width:14px;height:14px;background:linear-gradient(#3a3a3a,#4e4e4e);border:1px solid #1a1a1a;border-radius:3px"></div><svg style="position:absolute;left:1456px;top:390px;" width="14" height="14" viewBox="0 0 14 14"><path d="M2.5,7 L5.5,10.5 L12,2" stroke="#111" stroke-width="3" fill="none"/><path d="M2.5,7 L5.5,10.5 L12,2" stroke="#fff" stroke-width="1.5" fill="none"/></svg>
<div class="t" style="left:1477px;top:393px;color:#fff;font-size:11px;">X Ray</div>
<div style="left:1532px;top:391px;width:14px;height:14px;background:linear-gradient(#3a3a3a,#4e4e4e);border:1px solid #1a1a1a;border-radius:3px"></div>
<div class="t" style="left:1554px;top:393px;color:#000;font-size:11px;">Show Po</div>
<div class="t" style="left:1460px;top:418px;color:#000;font-size:11px;">Tint</div>
<div class="t" style="left:1537px;top:418px;color:#000;font-size:11px;">Parent:</div>
<div style="left:1453px;top:433px;width:68px;height:40px;background:#a4a4a4;border:1px solid #2e2e2e;border-radius:7px;overflow:hidden"><div style="left:0;top:0;width:66px;height:19px;background:#000"></div><div style="left:0;top:19px;width:10px;height:20px;background:#858585"></div></div>
<div class="t" style="left:1465px;top:457px;color:#000;font-size:11px;">: 0.000</div>
<div style="left:1530px;top:433px;width:69px;height:20px;background:linear-gradient(#bababa,#a6a6a6);border:1px solid #2e2e2e;border-radius:5px 5px 0 0"></div>
<svg style="position:absolute;left:1535px;top:436px;" width="14" height="14" viewBox="0 0 14 14"><path d="M7,1 L12.5,4 L12.5,10 L7,13 L1.5,10 L1.5,4 Z" fill="#e89848" stroke="#222" stroke-width="0.8"/><path d="M1.5,4 L7,7 L12.5,4 M7,7 V13" stroke="#fff" stroke-width="0.6" fill="none"/></svg>
<svg style="position:absolute;left:1582px;top:435px;" width="14" height="14" viewBox="0 0 14 14"><path d="M2,12 L8,6 M7,4 L10,7 M9,3 C10,1 12,1 13,2 C14,3 13,5 11,6" stroke="#111" stroke-width="1.6" fill="none"/></svg>
<div style="left:1530px;top:453px;width:69px;height:20px;background:linear-gradient(#545454,#404040);border:1px solid #1a1a1a;border-radius:0 0 5px 5px"></div>
<div class="t" style="left:1538px;top:457px;color:#fff;font-size:11px;">Object</div>
<svg style="position:absolute;left:1588px;top:456px;" width="7" height="14" viewBox="0 0 7 14"><path d="M0.5,5.5 L3.5,0.5 L6.5,5.5 Z M0.5,8.5 L3.5,13.5 L6.5,8.5 Z" fill="#c8c8c8"/></svg>
<div style="left:1453px;top:475px;width:68px;height:20px;background:linear-gradient(#6e6e6e,#8a8a8a);border:1px solid #2e2e2e;border-radius:8px;overflow:hidden"><div style="left:27px;top:0;width:20px;height:18px;background:#a8a8a8"></div><div style="left:47px;top:0;width:1px;height:18px;background:#2e2e2e"></div><div style="left:48px;top:0;width:20px;height:18px;background:#9a9a9a"></div></div>
<div class="t" style="left:1470px;top:480px;color:#000;font-size:11px;">0 p</div>
<svg style="position:absolute;left:1502px;top:478px;" width="16" height="14" viewBox="0 0 16 14"><path d="M2,4 H9 V11 H2 Z" fill="#fff" stroke="#111"/><path d="M11,2 C14,4 14,9 11,12" stroke="#4070d0" stroke-width="1.3" fill="none"/></svg>
<div style="left:1453px;top:510px;width:146px;height:8px;background:linear-gradient(#b5b5b5,#a5a5a5);border:1px solid #2e2e2e;border-radius:6px 6px 0 0"></div>
<div style="left:1608px;top:35px;width:12px;height:477px;background:#5e5e5e;border-radius:6px;border:1px solid #555"></div>
<div style="left:1608px;top:95px;width:12px;height:144px;background:linear-gradient(90deg,#8a8a8a,#7a7a7a);border-radius:6px;border:1px solid #5a5a5a"></div>
<svg style="position:absolute;left:1612px;top:28px;" width="12" height="12" viewBox="0 0 12 12"><path d="M1,0 L12,11 M5,0 L12,7 M9,0 L12,3" stroke="#bbb" stroke-width="0.9"/><path d="M0,0 L12,12 M4,0 L12,8 M8,0 L12,4" stroke="#222" stroke-width="0.6"/></svg>
<div style="left:0px;top:541px;width:1624px;height:578px;background:#393939;border-top:1px solid #555;border-left:1px solid #585858"></div>
<svg style="position:absolute;left:0;top:0" width="1624" height="1120"><g fill="#2c2c2c"><rect x="13" y="542" width="1" height="559"/><rect x="35" y="542" width="1" height="559"/><rect x="58" y="542" width="1" height="559"/><rect x="80" y="542" width="1" height="559"/><rect x="102" y="542" width="1" height="559"/><rect x="124" y="542" width="1" height="559"/><rect x="146" y="542" width="1" height="559"/><rect x="168" y="542" width="1" height="559"/><rect x="190" y="542" width="1" height="559"/><rect x="212" y="542" width="1" height="559"/><rect x="234" y="542" width="1" height="559"/><rect x="256" y="542" width="1" height="559"/><rect x="278" y="542" width="1" height="559"/><rect x="300" y="542" width="1" height="559"/><rect x="322" y="542" width="1" height="559"/><rect x="344" y="542" width="1" height="559"/><rect x="367" y="542" width="1" height="559"/><rect x="389" y="542" width="1" height="559"/><rect x="411" y="542" width="1" height="559"/><rect x="433" y="542" width="1" height="559"/><rect x="455" y="542" width="1" height="559"/><rect x="477" y="542" width="1" height="559"/><rect x="499" y="542" width="1" height="559"/><rect x="521" y="542" width="1" height="559"/><rect x="543" y="542" width="1" height="559"/><rect x="565" y="542" width="1" height="559"/><rect x="587" y="542" width="1" height="559"/><rect x="609" y="542" width="1" height="559"/><rect x="631" y="542" width="1" height="559"/><rect x="653" y="542" width="1" height="559"/><rect x="676" y="542" width="1" height="559"/><rect x="698" y="542" width="1" height="559"/><rect x="720" y="542" width="1" height="559"/><rect x="742" y="542" width="1" height="559"/><rect x="764" y="542" width="1" height="559"/><rect x="786" y="542" width="1" height="559"/><rect x="808" y="542" width="1" height="559"/><rect x="830" y="542" width="1" height="559"/><rect x="852" y="542" width="1" height="559"/><rect x="874" y="542" width="1" height="559"/><rect x="896" y="542" width="1" height="559"/><rect x="918" y="542" width="1" height="559"/><rect x="940" y="542" width="1" height="559"/><rect x="962" y="542" width="1" height="559"/><rect x="984" y="542" width="1" height="559"/><rect x="1007" y="542" width="1" height="559"/><rect x="1029" y="542" width="1" height="559"/><rect x="1051" y="542" width="1" height="559"/><rect x="1073" y="542" width="1" height="559"/><rect x="1095" y="542" width="1" height="559"/><rect x="1117" y="542" width="1" height="559"/><rect x="1139" y="542" width="1" height="559"/><rect x="1161" y="542" width="1" height="559"/><rect x="1183" y="542" width="1" height="559"/><rect x="1205" y="542" width="1" height="559"/><rect x="1227" y="542" width="1" height="559"/><rect x="1249" y="542" width="1" height="559"/><rect x="1271" y="542" width="1" height="559"/><rect x="1293" y="542" width="1" height="559"/><rect x="1316" y="542" width="1" height="559"/><rect x="1338" y="542" width="1" height="559"/><rect x="1360" y="542" width="1" height="559"/><rect x="1382" y="542" width="1" height="559"/><rect x="1404" y="542" width="1" height="559"/><rect x="1426" y="542" width="1" height="559"/><rect x="1448" y="542" width="1" height="559"/><rect x="1470" y="542" width="1" height="559"/><rect x="1492" y="542" width="1" height="559"/><rect x="1514" y="542" width="1" height="559"/><rect x="1536" y="542" width="1" height="559"/><rect x="1558" y="542" width="1" height="559"/><rect x="1580" y="542" width="1" height="559"/><rect x="1602" y="542" width="1" height="559"/><rect x="1" y="551" width="1606" height="1"/><rect x="1" y="573" width="1606" height="1"/><rect x="1" y="596" width="1606" height="1"/><rect x="1" y="618" width="1606" height="1"/><rect x="1" y="640" width="1606" height="1"/><rect x="1" y="662" width="1606" height="1"/><rect x="1" y="684" width="1606" height="1"/><rect x="1" y="706" width="1606" height="1"/><rect x="1" y="728" width="1606" height="1"/><rect x="1" y="750" width="1606" height="1"/><rect x="1" y="772" width="1606" height="1"/><rect x="1" y="794" width="1606" height="1"/><rect x="1" y="816" width="1606" height="1"/><rect x="1" y="838" width="1606" height="1"/><rect x="1" y="860" width="1606" height="1"/><rect x="1" y="882" width="1606" height="1"/><rect x="1" y="905" width="1606" height="1"/><rect x="1" y="927" width="1606" height="1"/><rect x="1" y="949" width="1606" height="1"/><rect x="1" y="971" width="1606" height="1"/><rect x="1" y="993" width="1606" height="1"/><rect x="1" y="1015" width="1606" height="1"/><rect x="1" y="1037" width="1606" height="1"/><rect x="1" y="1059" width="1606" height="1"/><rect x="1" y="1081" width="1606" height="1"/></g></svg>
<div class="t" style="left:30px;top:1079px;color:#fff;font-size:11px;">World</div>
<svg style="position:absolute;left:0;top:0" width="1624" height="1120"><path d="M459.6,781.7 C476.4,781.7 476.4,733.6 493.2,733.6" stroke="#1e1e1e" stroke-width="3" fill="none"/><path d="M459.6,781.7 C476.4,781.7 476.4,733.6 493.2,733.6" stroke="#d8d8d8" stroke-width="1.4" fill="none"/><path d="M648.2,711 C690.85,711 670.85,855.1 713.5,855.1" stroke="#1e1e1e" stroke-width="3" fill="none"/><path d="M648.2,711 C690.85,711 670.85,855.1 713.5,855.1" stroke="#d8d8d8" stroke-width="1.4" fill="none"/><path d="M879.4,735.9 C933.3499999999999,735.9 913.3499999999999,975.5 967.3,975.5" stroke="#1e1e1e" stroke-width="3" fill="none"/><path d="M879.4,735.9 C933.3499999999999,735.9 913.3499999999999,975.5 967.3,975.5" stroke="#d8d8d8" stroke-width="1.4" fill="none"/><path d="M1232.4,686.2 C1286.5,686.2 1266.5,791.4 1320.6,791.4" stroke="#1e1e1e" stroke-width="3" fill="none"/><path d="M1232.4,686.2 C1286.5,686.2 1266.5,791.4 1320.6,791.4" stroke="#d8d8d8" stroke-width="1.4" fill="none"/><path d="M1474.9,769.1 C1481.75,769.1 1481.75,790.3 1488.6,790.3" stroke="#1e1e1e" stroke-width="3" fill="none"/><path d="M1474.9,769.1 C1481.75,769.1 1481.75,790.3 1488.6,790.3" stroke="#d8d8d8" stroke-width="1.4" fill="none"/></svg>
<div style="left:297px;top:747px;width:166px;height:238px;background:rgba(0,0,0,0.25);border-radius:7px;filter:blur(3px)"></div>
<div style="left:294px;top:743px;width:166px;height:238px;background:rgba(96,96,96,0.93);border:1px solid #1c1c1c;border-radius:7px;overflow:hidden"><div style="left:0;top:0;width:166px;height:21px;background:rgba(80,80,86,0.9)"></div></div>
<svg style="position:absolute;left:301px;top:751px;" width="11" height="10" viewBox="0 0 11 10"><path d="M0.5,0.5 L10.5,0.5 L5.5,9.5 Z" fill="#454545"/></svg>
<div class="t" style="left:320px;top:750px;color:#000;font-size:11px;">Sky Texture</div>
<div class="t" style="left:38px;top:776px;width:400px;text-align:right;color:#000;font-size:11px;">Color</div>
<div style="left:306px;top:800px;width:143px;height:21px;background:linear-gradient(#505050,#404040);border:1px solid #1a1a1a;border-radius:4px"></div>
<div class="t" style="left:314px;top:805px;color:#fff;font-size:11px;">Hosek / Wilkie</div>
<svg style="position:absolute;left:438px;top:804px;" width="7" height="14" viewBox="0 0 7 14"><path d="M0.5,5.5 L3.5,0.5 L6.5,5.5 Z M0.5,8.5 L3.5,13.5 L6.5,8.5 Z" fill="#c8c8c8"/></svg>
<div style="left:306px;top:827px;width:143px;height:66px;background:#9c9c9c;border-radius:4px"></div>
<svg style="position:absolute;left:345px;top:827px;" width="66" height="66" viewBox="0 0 66 66"><defs><radialGradient id="skys" cx="0.45" cy="0.42" r="0.6"><stop offset="0" stop-color="#ffffff"/><stop offset="0.5" stop-color="#e4e4e4"/><stop offset="0.86" stop-color="#8a8a8a"/><stop offset="1" stop-color="#2a2a2a"/></radialGradient></defs><circle cx="32.5" cy="32.5" r="32" fill="url(#skys)" stroke="#333" stroke-width="0.8"/></svg>
<div style="left:306px;top:899px;width:143px;height:21px;background:linear-gradient(#c0c0c0,#a8a8a8);border:1px solid #2a2a2a;border-radius:10px"></div>
<svg style="position:absolute;left:312px;top:905px;" width="5" height="8" viewBox="0 0 5 8"><path d="M4.5,0.5 L0.5,4 L4.5,7.5 Z" fill="#7a7a7a"/></svg>
<svg style="position:absolute;left:438px;top:905px;" width="5" height="8" viewBox="0 0 5 8"><path d="M0.5,0.5 L4.5,4 L0.5,7.5 Z" fill="#7a7a7a"/></svg>
<div class="t" style="left:321px;top:904px;color:#000;font-size:11px;">Turbidity:</div>
<div class="t" style="left:31px;top:904px;width:400px;text-align:right;color:#000;font-size:11px;">8.480</div>
<div style="left:306px;top:927px;width:143px;height:21px;background:linear-gradient(#c0c0c0,#a8a8a8);border:1px solid #2a2a2a;border-radius:10px;overflow:hidden"><div style="left:0;top:0;width:29px;height:19px;background:linear-gradient(#787878,#8e8e8e)"></div></div>
<div class="t" style="left:306.0px;top:932px;width:143px;text-align:center;color:#000;font-size:11px;">Ground Albedo: 0.148</div>
<div class="t" style="left:314px;top:959px;color:#000;font-size:11px;">Vector</div>
<div style="left:496px;top:676px;width:156px;height:127px;background:rgba(0,0,0,0.25);border-radius:7px;filter:blur(3px)"></div>
<div style="left:493px;top:672px;width:156px;height:127px;background:rgba(96,96,96,0.93);border:1px solid #1c1c1c;border-radius:7px;overflow:hidden"><div style="left:0;top:0;width:156px;height:21px;background:rgba(80,80,86,0.9)"></div></div>
<svg style="position:absolute;left:500px;top:680px;" width="11" height="10" viewBox="0 0 11 10"><path d="M0.5,0.5 L10.5,0.5 L5.5,9.5 Z" fill="#454545"/></svg>
<div class="t" style="left:519px;top:679px;color:#000;font-size:11px;">Bright/Contrast</div>
<div class="t" style="left:225px;top:705px;width:400px;text-align:right;color:#000;font-size:11px;">Color</div>
<div class="t" style="left:513px;top:728px;color:#000;font-size:11px;">Color</div>
<div style="left:506px;top:748px;width:131px;height:21px;background:linear-gradient(#c0c0c0,#a8a8a8);border:1px solid #2a2a2a;border-radius:10px"></div>
<svg style="position:absolute;left:512px;top:754px;" width="5" height="8" viewBox="0 0 5 8"><path d="M4.5,0.5 L0.5,4 L4.5,7.5 Z" fill="#7a7a7a"/></svg>
<svg style="position:absolute;left:626px;top:754px;" width="5" height="8" viewBox="0 0 5 8"><path d="M0.5,0.5 L4.5,4 L0.5,7.5 Z" fill="#7a7a7a"/></svg>
<div class="t" style="left:521px;top:753px;color:#000;font-size:11px;">Bright:</div>
<div class="t" style="left:219px;top:753px;width:400px;text-align:right;color:#000;font-size:11px;">0.050</div>
<div style="left:506px;top:772px;width:131px;height:21px;background:linear-gradient(#c0c0c0,#a8a8a8);border:1px solid #2a2a2a;border-radius:10px"></div>
<svg style="position:absolute;left:512px;top:778px;" width="5" height="8" viewBox="0 0 5 8"><path d="M4.5,0.5 L0.5,4 L4.5,7.5 Z" fill="#7a7a7a"/></svg>
<svg style="position:absolute;left:626px;top:778px;" width="5" height="8" viewBox="0 0 5 8"><path d="M0.5,0.5 L4.5,4 L0.5,7.5 Z" fill="#7a7a7a"/></svg>
<div class="t" style="left:521px;top:777px;color:#000;font-size:11px;">Contrast:</div>
<div class="t" style="left:219px;top:777px;width:400px;text-align:right;color:#000;font-size:11px;">0.280</div>
<div style="left:717px;top:701px;width:166px;height:175px;background:rgba(0,0,0,0.25);border-radius:7px;filter:blur(3px)"></div>
<div style="left:714px;top:697px;width:166px;height:175px;background:rgba(96,96,96,0.93);border:1px solid #1c1c1c;border-radius:7px;overflow:hidden"><div style="left:0;top:0;width:166px;height:21px;background:rgba(80,80,86,0.9)"></div></div>
<svg style="position:absolute;left:721px;top:705px;" width="11" height="10" viewBox="0 0 11 10"><path d="M0.5,0.5 L10.5,0.5 L5.5,9.5 Z" fill="#454545"/></svg>
<div class="t" style="left:740px;top:704px;color:#000;font-size:11px;">Hue Saturation Value</div>
<div class="t" style="left:455px;top:730px;width:400px;text-align:right;color:#000;font-size:11px;">Color</div>
<div style="left:725px;top:748px;width:142px;height:21px;background:linear-gradient(#c0c0c0,#a8a8a8);border:1px solid #2a2a2a;border-radius:10px"></div>
<svg style="position:absolute;left:731px;top:754px;" width="5" height="8" viewBox="0 0 5 8"><path d="M4.5,0.5 L0.5,4 L4.5,7.5 Z" fill="#7a7a7a"/></svg>
<svg style="position:absolute;left:856px;top:754px;" width="5" height="8" viewBox="0 0 5 8"><path d="M0.5,0.5 L4.5,4 L0.5,7.5 Z" fill="#7a7a7a"/></svg>
<div class="t" style="left:740px;top:753px;color:#000;font-size:11px;">Hue:</div>
<div class="t" style="left:449px;top:753px;width:400px;text-align:right;color:#000;font-size:11px;">0.920</div>
<div style="left:725px;top:772px;width:142px;height:21px;background:linear-gradient(#c0c0c0,#a8a8a8);border:1px solid #2a2a2a;border-radius:10px"></div>
<svg style="position:absolute;left:731px;top:778px;" width="5" height="8" viewBox="0 0 5 8"><path d="M4.5,0.5 L0.5,4 L4.5,7.5 Z" fill="#7a7a7a"/></svg>
<svg style="position:absolute;left:856px;top:778px;" width="5" height="8" viewBox="0 0 5 8"><path d="M0.5,0.5 L4.5,4 L0.5,7.5 Z" fill="#7a7a7a"/></svg>
<div class="t" style="left:740px;top:777px;color:#000;font-size:11px;">Saturation:</div>
<div class="t" style="left:449px;top:777px;width:400px;text-align:right;color:#000;font-size:11px;">1.260</div>
<div style="left:725px;top:797px;width:142px;height:21px;background:linear-gradient(#c0c0c0,#a8a8a8);border:1px solid #2a2a2a;border-radius:10px"></div>
<svg style="position:absolute;left:731px;top:803px;" width="5" height="8" viewBox="0 0 5 8"><path d="M4.5,0.5 L0.5,4 L4.5,7.5 Z" fill="#7a7a7a"/></svg>
<svg style="position:absolute;left:856px;top:803px;" width="5" height="8" viewBox="0 0 5 8"><path d="M0.5,0.5 L4.5,4 L0.5,7.5 Z" fill="#7a7a7a"/></svg>
<div class="t" style="left:740px;top:802px;color:#000;font-size:11px;">Value:</div>
<div class="t" style="left:449px;top:802px;width:400px;text-align:right;color:#000;font-size:11px;">1.000</div>
<div style="left:725px;top:821px;width:142px;height:21px;background:linear-gradient(#5e5e5e,#7a7a7a);border:1px solid #2a2a2a;border-radius:10px"></div>
<div class="t" style="left:739px;top:826px;color:#000;font-size:11px;">Fac:</div>
<div class="t" style="left:450px;top:826px;width:400px;text-align:right;color:#000;font-size:11px;">1.000</div>
<div class="t" style="left:732px;top:849px;color:#000;font-size:11px;">Color</div>
<div style="left:970px;top:651px;width:266px;height:345px;background:rgba(0,0,0,0.25);border-radius:7px;filter:blur(3px)"></div>
<div style="left:967px;top:647px;width:266px;height:345px;background:rgba(96,96,96,0.93);border:1px solid #f0a030;border-radius:7px;overflow:hidden"><div style="left:0;top:0;width:266px;height:22px;background:rgba(80,80,86,0.9)"></div></div>
<svg style="position:absolute;left:974px;top:655px;" width="11" height="10" viewBox="0 0 11 10"><path d="M0.5,0.5 L10.5,0.5 L5.5,9.5 Z" fill="#e06020"/></svg>
<div class="t" style="left:993px;top:654px;color:#000;font-size:11px;">RGB Curves</div>
<div class="t" style="left:808px;top:680px;width:400px;text-align:right;color:#000;font-size:11px;">Color</div>
<div style="left:978px;top:704px;width:88px;height:21px;background:linear-gradient(#545454,#404040);border:1px solid #1a1a1a;border-radius:4px;overflow:hidden"><div style="left:42px;top:0;width:22px;height:19px;background:linear-gradient(#6e9ae0,#5680c2)"></div><div style="left:20px;top:0;width:1px;height:19px;background:#1a1a1a"></div><div style="left:42px;top:0;width:1px;height:19px;background:#1a1a1a"></div><div style="left:64px;top:0;width:1px;height:19px;background:#1a1a1a"></div></div>
<div class="t" style="left:979.0px;top:709px;width:20px;text-align:center;color:#fff;font-size:11px;">C</div>
<div class="t" style="left:1000.5px;top:709px;width:20px;text-align:center;color:#fff;font-size:11px;">R</div>
<div class="t" style="left:1022.0px;top:709px;width:20px;text-align:center;color:#000;font-size:11px;">G</div>
<div class="t" style="left:1044.0px;top:709px;width:20px;text-align:center;color:#fff;font-size:11px;">B</div>
<svg style="position:absolute;left:1113px;top:705px;" width="18" height="18" viewBox="0 0 18 18"><circle cx="10" cy="7" r="5.5" fill="#fff" stroke="#111" stroke-width="1.5"/><path d="M7.5,7 H12.5 M10,4.5 V9.5" stroke="#111" stroke-width="1.6"/><path d="M6,11 L1.5,15.5" stroke="#c07030" stroke-width="2.5"/></svg>
<svg style="position:absolute;left:1134px;top:705px;" width="18" height="18" viewBox="0 0 18 18"><circle cx="10" cy="7" r="5.5" fill="#fff" stroke="#111" stroke-width="1.5"/><path d="M7.5,7 H12.5" stroke="#111" stroke-width="1.6"/><path d="M6,11 L1.5,15.5" stroke="#c07030" stroke-width="2.5"/></svg>
<svg style="position:absolute;left:1156px;top:705px;" width="18" height="18" viewBox="0 0 18 18"><path d="M3,15 L10,8" stroke="#111" stroke-width="3.6"/><path d="M3,15 L10,8" stroke="#6a9ae0" stroke-width="2"/><path d="M9,9 C7,6 9,2 13,2 L11,5 L13,7 L16,5 C16,9 12,11 9,9" fill="#6a9ae0" stroke="#111" stroke-width="0.9"/></svg>
<div style="left:1177px;top:705px;width:18px;height:18px;background:#5a5a5a;border-radius:3px"></div>
<svg style="position:absolute;left:1180px;top:708px;" width="12" height="12" viewBox="0 0 12 12"><circle cx="6" cy="6" r="3.8" fill="#eee" stroke="#222" stroke-width="0.8"/></svg>
<svg style="position:absolute;left:1200px;top:706px;" width="16" height="16" viewBox="0 0 16 16"><path d="M3,3 L13,13 M13,3 L3,13" stroke="#111" stroke-width="3.6"/><path d="M3.3,3.3 L12.7,12.7 M12.7,3.3 L3.3,12.7" stroke="#fff" stroke-width="2"/></svg>
<svg style="position:absolute;left:979px;top:730px;" width="242" height="177" viewBox="0 0 242 177"><rect x="0.5" y="0.5" width="241" height="176" fill="#9d9d9d" stroke="#111"/><path d="M60.5,1 V176 M1,44.5 H241" stroke="#b5b5b5" stroke-width="1"/><path d="M120.5,1 V176 M1,88.5 H241" stroke="#b5b5b5" stroke-width="1"/><path d="M181.5,1 V176 M1,132.5 H241" stroke="#b5b5b5" stroke-width="1"/><path d="M1,176 C8,164 20,142 36,132 C60,118 90,108 125,98 C160,88 190,72 210,52 C225,36 234,20 241,1" stroke="#111" stroke-width="1.3" fill="none"/><rect x="35" y="131" width="3" height="3" fill="#000"/><rect x="208" y="51" width="4" height="4" fill="#fff"/><rect x="0" y="174" width="3" height="3" fill="#000"/><rect x="239" y="0" width="3" height="3" fill="#000"/></svg>
<div style="left:979px;top:914px;width:242px;height:21px;background:linear-gradient(#c0c0c0,#a8a8a8);border:1px solid #2a2a2a;border-radius:10px"></div>
<div style="left:1098px;top:914px;width:1px;height:21px;background:#2a2a2a"></div>
<svg style="position:absolute;left:985px;top:920px;" width="5" height="8" viewBox="0 0 5 8"><path d="M4.5,0.5 L0.5,4 L4.5,7.5 Z" fill="#7a7a7a"/></svg>
<svg style="position:absolute;left:1087px;top:920px;" width="5" height="8" viewBox="0 0 5 8"><path d="M0.5,0.5 L4.5,4 L0.5,7.5 Z" fill="#7a7a7a"/></svg>
<svg style="position:absolute;left:1104px;top:920px;" width="5" height="8" viewBox="0 0 5 8"><path d="M4.5,0.5 L0.5,4 L4.5,7.5 Z" fill="#7a7a7a"/></svg>
<svg style="position:absolute;left:1209px;top:920px;" width="5" height="8" viewBox="0 0 5 8"><path d="M0.5,0.5 L4.5,4 L0.5,7.5 Z" fill="#7a7a7a"/></svg>
<div class="t" style="left:681px;top:919px;width:400px;text-align:right;color:#000;font-size:11px;">X 0.87273</div>
<div class="t" style="left:802px;top:919px;width:400px;text-align:right;color:#000;font-size:11px;">Y 0.70625</div>
<div style="left:979px;top:941px;width:242px;height:21px;background:linear-gradient(#5e5e5e,#7a7a7a);border:1px solid #2a2a2a;border-radius:10px"></div>
<div class="t" style="left:993px;top:946px;color:#000;font-size:11px;">Fac:</div>
<div class="t" style="left:804px;top:946px;width:400px;text-align:right;color:#000;font-size:11px;">1.000</div>
<div class="t" style="left:986px;top:970px;color:#000;font-size:11px;">Color</div>
<div style="left:1323px;top:734px;width:156px;height:103px;background:rgba(0,0,0,0.25);border-radius:7px;filter:blur(3px)"></div>
<div style="left:1320px;top:730px;width:156px;height:103px;background:rgba(96,96,96,0.93);border:1px solid #1c1c1c;border-radius:7px;overflow:hidden"><div style="left:0;top:0;width:156px;height:21px;background:rgba(80,80,86,0.9)"></div></div>
<svg style="position:absolute;left:1327px;top:738px;" width="11" height="10" viewBox="0 0 11 10"><path d="M0.5,0.5 L10.5,0.5 L5.5,9.5 Z" fill="#454545"/></svg>
<div class="t" style="left:1346px;top:737px;color:#000;font-size:11px;">Background</div>
<div class="t" style="left:1051px;top:763px;width:400px;text-align:right;color:#000;font-size:11px;">Background</div>
<div class="t" style="left:1340px;top:786px;color:#000;font-size:11px;">Color</div>
<div style="left:1332px;top:805px;width:130px;height:22px;background:linear-gradient(#c0c0c0,#a8a8a8);border:1px solid #2a2a2a;border-radius:10px"></div>
<svg style="position:absolute;left:1338px;top:811px;" width="5" height="8" viewBox="0 0 5 8"><path d="M4.5,0.5 L0.5,4 L4.5,7.5 Z" fill="#7a7a7a"/></svg>
<svg style="position:absolute;left:1451px;top:811px;" width="5" height="8" viewBox="0 0 5 8"><path d="M0.5,0.5 L4.5,4 L0.5,7.5 Z" fill="#7a7a7a"/></svg>
<div class="t" style="left:1347px;top:810px;color:#000;font-size:11px;">Strength:</div>
<div class="t" style="left:1044px;top:810px;width:400px;text-align:right;color:#000;font-size:11px;">1.400</div>
<div style="left:0px;top:0px;width:1607px;height:1119px;overflow:hidden"><div style="left:1491px;top:760px;width:160px;height:75px;background:rgba(0,0,0,0.25);border-radius:7px;filter:blur(3px)"></div>
<div style="left:1488px;top:756px;width:160px;height:75px;background:rgba(96,96,96,0.93);border:1px solid #1c1c1c;border-radius:7px;overflow:hidden"><div style="left:0;top:0;width:160px;height:21px;background:rgba(80,80,86,0.9)"></div></div>
<svg style="position:absolute;left:1495px;top:764px;" width="11" height="10" viewBox="0 0 11 10"><path d="M0.5,0.5 L10.5,0.5 L5.5,9.5 Z" fill="#454545"/></svg>
<div class="t" style="left:1514px;top:763px;color:#000;font-size:11px;">World Output</div></div>
<div class="t" style="left:1506px;top:785px;color:#000;font-size:11px;">Surface</div>
<div class="t" style="left:1506px;top:809px;color:#000;font-size:11px;">Volume</div>
<svg style="position:absolute;left:0;top:0" width="1624" height="1120"><circle cx="459.6" cy="781.7" r="5" fill="#c7c729" stroke="#1a1a1a" stroke-width="1"/><circle cx="294" cy="964.3" r="5" fill="#6363c7" stroke="#1a1a1a" stroke-width="1"/><circle cx="648.2" cy="711" r="5" fill="#c7c729" stroke="#1a1a1a" stroke-width="1"/><circle cx="493.2" cy="733.6" r="5" fill="#c7c729" stroke="#1a1a1a" stroke-width="1"/><circle cx="493.2" cy="758" r="5" fill="#a1a1a1" stroke="#1a1a1a" stroke-width="1"/><circle cx="493.2" cy="782" r="5" fill="#a1a1a1" stroke="#1a1a1a" stroke-width="1"/><circle cx="879.4" cy="735.9" r="5" fill="#c7c729" stroke="#1a1a1a" stroke-width="1"/><circle cx="713.5" cy="758.2" r="5" fill="#a1a1a1" stroke="#1a1a1a" stroke-width="1"/><circle cx="713.5" cy="782" r="5" fill="#a1a1a1" stroke="#1a1a1a" stroke-width="1"/><circle cx="713.5" cy="806.6" r="5" fill="#a1a1a1" stroke="#1a1a1a" stroke-width="1"/><circle cx="713.5" cy="831" r="5" fill="#a1a1a1" stroke="#1a1a1a" stroke-width="1"/><circle cx="713.5" cy="855.1" r="5" fill="#c7c729" stroke="#1a1a1a" stroke-width="1"/><circle cx="1232.4" cy="686.2" r="5" fill="#c7c729" stroke="#1a1a1a" stroke-width="1"/><circle cx="967.3" cy="951.3" r="5" fill="#a1a1a1" stroke="#1a1a1a" stroke-width="1"/><circle cx="967.3" cy="975.5" r="5" fill="#c7c729" stroke="#1a1a1a" stroke-width="1"/><circle cx="1474.9" cy="769.1" r="5" fill="#63c763" stroke="#1a1a1a" stroke-width="1"/><circle cx="1320.6" cy="791.4" r="5" fill="#c7c729" stroke="#1a1a1a" stroke-width="1"/><circle cx="1320.6" cy="815.3" r="5" fill="#a1a1a1" stroke="#1a1a1a" stroke-width="1"/><circle cx="1488.6" cy="790.3" r="5" fill="#63c763" stroke="#1a1a1a" stroke-width="1"/><circle cx="1488.6" cy="814.7" r="5" fill="#63c763" stroke="#1a1a1a" stroke-width="1"/></svg>
<svg style="position:absolute;left:0;top:0" width="1624" height="1120"><path d="M486.9,858.4 C484.4,858.4 475.3,858.5 471.4,858.4 C467.6,858.2 465.0,857.6 463.7,857.4" stroke="#000" stroke-width="3" fill="none" stroke-linecap="round" stroke-linejoin="round"/><path d="M474.4,847.7 C473.4,848.5 470.2,851.0 468.5,852.6 C466.9,854.2 465.1,855.5 464.2,857.4 C463.3,859.4 463.5,862.1 463.2,864.2 C463.0,866.3 462.2,869.5 462.7,870.0 C463.3,870.5 466.0,867.6 466.6,867.1" stroke="#000" stroke-width="3.6" fill="none" stroke-linecap="round" stroke-linejoin="round"/><path d="M502.4,854.5 C503.5,854.3 506.1,853.3 509.2,853.1 C512.2,852.8 517.6,852.0 520.8,853.1 C524.0,854.1 526.8,856.9 528.5,859.4 C530.3,861.9 531.6,865.7 531.4,868.1 C531.3,870.4 529.8,872.1 527.6,873.4 C525.3,874.7 521.6,875.5 517.9,875.8 C514.2,876.1 509.3,875.6 505.3,875.3 C501.3,875.0 496.0,874.2 493.7,873.9 C491.4,873.5 492.1,873.5 491.8,873.4" stroke="#000" stroke-width="3" fill="none" stroke-linecap="round" stroke-linejoin="round"/><path d="M503.4,859.4 C503.1,861.0 502.3,865.5 501.4,869.0 C500.6,872.6 499.6,876.0 498.5,880.6 C497.5,885.3 495.7,894.3 495.2,897.1" stroke="#000" stroke-width="3" fill="none" stroke-linecap="round" stroke-linejoin="round"/><path d="M499.5,876.8 C501.0,878.4 506.0,884.0 508.2,886.4 C510.5,888.9 509.8,888.9 513.1,891.3 C516.3,893.7 525.1,899.3 527.6,901.0" stroke="#000" stroke-width="3" fill="none" stroke-linecap="round" stroke-linejoin="round"/><path d="M545.0,877.3 C543.4,877.8 537.4,878.9 535.3,880.6 C533.2,882.3 531.8,885.3 532.4,887.4 C533.1,889.5 536.0,891.4 539.2,893.2 C542.4,895.0 547.9,897.1 551.8,898.1 C555.6,899.0 559.8,899.7 562.4,899.0 C565.0,898.4 566.8,896.0 567.2,894.2 C567.7,892.4 567.9,890.3 565.3,888.4 C562.7,886.4 555.1,884.4 551.8,882.6 C548.4,880.7 546.1,878.1 545.0,877.3" stroke="#000" stroke-width="3" fill="none" stroke-linecap="round" stroke-linejoin="round"/><path d="M595.8,853.5 C593.4,856.6 585.1,866.4 581.8,871.9 C578.4,877.4 577.6,881.1 575.9,886.4 C574.3,891.8 572.7,899.3 572.1,903.9 C571.4,908.4 571.1,911.8 572.1,913.5 C573.0,915.3 575.1,914.8 577.9,914.5 C580.6,914.2 585.1,912.7 588.5,911.6 C591.9,910.5 596.6,908.4 598.2,907.7" stroke="#000" stroke-width="3" fill="none" stroke-linecap="round" stroke-linejoin="round"/><path d="M626.3,859.4 C624.3,861.3 618.0,866.1 614.7,871.0 C611.3,875.8 608.0,882.9 605.9,888.4 C603.8,893.9 602.9,898.4 602.1,903.9 C601.3,909.3 599.2,918.5 601.1,921.3 C603.0,924.0 611.6,920.5 613.7,920.3" stroke="#000" stroke-width="3" fill="none" stroke-linecap="round" stroke-linejoin="round"/></svg>
<div style="left:1607px;top:542px;width:17px;height:577px;background:#393939"></div>
<div style="left:1608px;top:547px;width:12px;height:550px;background:linear-gradient(90deg,#a2a2a2,#8a8a8a);border-radius:6px;border:1px solid #2e2e2e"></div>
<div style="left:1609px;top:563px;width:15px;height:14px;background:rgba(40,40,40,0.55);border-radius:4px 0 0 4px"></div>
<svg style="position:absolute;left:1612px;top:566px;" width="8" height="8" viewBox="0 0 8 8"><path d="M4,0.5 V7.5 M0.5,4 H7.5" stroke="#8a8a8a" stroke-width="2"/></svg>
<div style="left:0px;top:1101px;width:1607px;height:18px;background:#393939"></div>
<div style="left:5px;top:1103px;width:1597px;height:12px;background:#474747;border-radius:6px;border:1px solid #333"></div>
<div style="left:5px;top:1103px;width:1553px;height:12px;background:linear-gradient(#a0a0a0,#808080);border-radius:6px;border:1px solid #333"></div>
<div style="left:0px;top:541px;width:1624px;height:1px;background:#555"></div>
<div style="left:0px;top:541px;width:1px;height:578px;background:#5a5a5a"></div>
<svg style="position:absolute;left:1610px;top:541px;" width="14" height="14" viewBox="0 0 14 14"><path d="M1,0 L14,13 M5,0 L14,9 M9,0 L14,5" stroke="#bbb" stroke-width="0.9"/><path d="M0,0 L14,14 M4,0 L14,10 M8,0 L14,6" stroke="#222" stroke-width="0.6"/></svg>
<div style="left:1624px;top:28px;width:288px;height:1117px;background:#727272"></div>
<div style="left:1624px;top:28px;width:1px;height:1117px;background:#000"></div>
<div style="left:1625px;top:28px;width:1px;height:1117px;background:#7e7e7e"></div>
<div style="left:1626px;top:28px;width:286px;height:25px;background:linear-gradient(#707070,#6c6c6c)"></div>
<div style="left:1626px;top:53px;width:286px;height:1px;background:#5e5e5e"></div>
<div style="left:1626px;top:54px;width:286px;height:1px;background:#7a7a7a"></div>
<div style="left:1633px;top:32px;width:32px;height:20px;background:linear-gradient(#545454,#3f3f3f);border:1px solid #161616;border-radius:4px;"></div>
<svg style="position:absolute;left:1637px;top:35px;" width="14" height="14" viewBox="0 0 14 14"><rect x="1" y="1.5" width="12" height="4" rx="2" fill="#555" stroke="#ddd" stroke-width="0.8"/><rect x="8" y="1.5" width="5" height="4" rx="2" fill="#eee"/><rect x="1" y="8.5" width="12" height="4" rx="2" fill="#eee" stroke="#111" stroke-width="0.8"/><path d="M2.5,10.5 L4,9.5 V11.5 Z M11.5,10.5 L10,9.5 V11.5 Z" fill="#111"/></svg>
<svg style="position:absolute;left:1654px;top:35px;" width="7" height="14" viewBox="0 0 7 14"><path d="M0.5,5.5 L3.5,0.5 L6.5,5.5 Z M0.5,8.5 L3.5,13.5 L6.5,8.5 Z" fill="#c8c8c8"/></svg>
<div style="left:1673px;top:33px;width:239px;height:19px;background:linear-gradient(#4e4e4e,#3c3c3c);border:1px solid #1a1a1a;border-radius:4px 0 0 4px"></div>
<div style="left:1693px;top:33px;width:1px;height:19px;background:#222"></div>
<div style="left:1713px;top:33px;width:1px;height:19px;background:#222"></div>
<div style="left:1733px;top:33px;width:1px;height:19px;background:#222"></div>
<div style="left:1753px;top:33px;width:1px;height:19px;background:#222"></div>
<div style="left:1773px;top:33px;width:1px;height:19px;background:#222"></div>
<div style="left:1792px;top:33px;width:1px;height:19px;background:#222"></div>
<div style="left:1812px;top:33px;width:1px;height:19px;background:#222"></div>
<div style="left:1832px;top:33px;width:1px;height:19px;background:#222"></div>
<div style="left:1852px;top:33px;width:1px;height:19px;background:#222"></div>
<div style="left:1872px;top:33px;width:1px;height:19px;background:#222"></div>
<div style="left:1892px;top:33px;width:1px;height:19px;background:#222"></div>
<div style="left:1674px;top:33px;width:19px;height:19px;background:linear-gradient(#6e9ae0,#5680c2);border:1px solid #2a2a2a;border-radius:4px 0 0 4px"></div>
<svg style="position:absolute;left:1676px;top:34px;" width="16" height="16" viewBox="0 0 16 16"><rect x="1.5" y="4.5" width="13" height="9" rx="1" fill="#222" stroke="#eee" stroke-width="1.2"/><rect x="3" y="2.5" width="3" height="2" fill="#eee"/><circle cx="9.5" cy="9.5" r="3" fill="#333" stroke="#ddd" stroke-width="1"/><circle cx="9.5" cy="9.5" r="1.6" fill="#8a3030"/><circle cx="5" cy="6.5" r="0.8" fill="#e22"/></svg>
<svg style="position:absolute;left:1696px;top:34px;" width="16" height="16" viewBox="0 0 16 16"><rect x="4" y="4" width="10" height="10" fill="#d8d0b0" stroke="#333" stroke-width="0.8" transform="rotate(8 9 9)"/><rect x="2" y="1.5" width="10" height="10" fill="#b8c4d8" stroke="#333" stroke-width="0.8"/><rect x="6.5" y="3" width="2.5" height="5" fill="#4a78c0"/><circle cx="5.5" cy="8" r="1.6" fill="#eee" stroke="#222" stroke-width="0.6"/></svg>
<svg style="position:absolute;left:1716px;top:34px;" width="16" height="16" viewBox="0 0 16 16"><circle cx="4" cy="4" r="2" fill="#f4f070" opacity="0.6"/><rect x="8.5" y="2" width="5.5" height="9" rx="2.7" fill="#7aa0d8" stroke="#111" stroke-width="0.7"/><circle cx="6.5" cy="11" r="3.5" fill="#bbb" stroke="#111" stroke-width="0.7"/></svg>
<svg style="position:absolute;left:1736px;top:34px;" width="16" height="16" viewBox="0 0 16 16"><circle cx="8" cy="8" r="6.3" fill="#4a78b8" stroke="#222" stroke-width="0.8"/><path d="M3.5,5.5 C5,3 8,3.5 8,6 C8,8 6,8 6.5,10.5 C5,11 3,9 3.5,5.5 Z M9.5,9.5 C11,8.5 13,9.5 12.5,11.5 C11,13 9.5,12 9.5,9.5 Z M10,3 C11.5,3.2 13,4.5 13.5,6 L11,5.5 Z" fill="#6a9848"/></svg>
<svg style="position:absolute;left:1756px;top:34px;" width="16" height="16" viewBox="0 0 16 16"><path d="M8,1.5 L14,4.5 L14,11.5 L8,14.5 L2,11.5 L2,4.5 Z" fill="#c89058" stroke="#222" stroke-width="0.7"/><path d="M8,7.5 L14,4.5 L14,11.5 L8,14.5 Z" fill="#a87038"/><path d="M2,4.5 L8,7.5 L14,4.5" stroke="#f8e0b0" stroke-width="0.7" fill="none"/></svg>
<svg style="position:absolute;left:1776px;top:34px;" width="16" height="16" viewBox="0 0 16 16"><g transform="rotate(-35 8 8)"><rect x="1" y="5.5" width="8" height="5" rx="2.5" fill="none" stroke="#111" stroke-width="2.6"/><rect x="7" y="5.5" width="8" height="5" rx="2.5" fill="none" stroke="#111" stroke-width="2.6"/><rect x="1" y="5.5" width="8" height="5" rx="2.5" fill="none" stroke="#d0d0d0" stroke-width="1.2"/><rect x="7" y="5.5" width="8" height="5" rx="2.5" fill="none" stroke="#d0d0d0" stroke-width="1.2"/></g></svg>
<svg style="position:absolute;left:1795px;top:34px;" width="16" height="16" viewBox="0 0 16 16"><path d="M3,14 L10,7" stroke="#111" stroke-width="3.4"/><path d="M3,14 L10,7" stroke="#6a98d8" stroke-width="1.8"/><path d="M9,8.5 C7,5.5 9,1.5 13,1.5 L11,4 L13,6 L15,4 C15,8 12,10.5 9,8.5" fill="#6a98d8" stroke="#111" stroke-width="0.8"/></svg>
<svg style="position:absolute;left:1815px;top:34px;" width="16" height="16" viewBox="0 0 16 16"><path d="M2.5,3 L13.5,3 L8,13.5 Z" fill="none" stroke="#ddd" stroke-width="1"/><circle cx="2.5" cy="3" r="1.4" fill="#fff" stroke="#111" stroke-width="0.6"/><circle cx="13.5" cy="3" r="1.4" fill="#fff" stroke="#111" stroke-width="0.6"/><circle cx="8" cy="13.5" r="1.4" fill="#fff" stroke="#111" stroke-width="0.6"/></svg>
<svg style="position:absolute;left:1835px;top:34px;" width="16" height="16" viewBox="0 0 16 16"><defs><radialGradient id="mtg" cx="0.4" cy="0.35" r="0.7"><stop offset="0" stop-color="#c8c8c8"/><stop offset="1" stop-color="#555"/></radialGradient></defs><circle cx="8" cy="8" r="6.2" fill="url(#mtg)" stroke="#222" stroke-width="0.8"/><path d="M8,8 L8,14 A6,6 0 0 1 2,8 Z" fill="#a07868" opacity="0.8"/><path d="M8,8 L14,8 A6,6 0 0 1 8,14 Z" fill="#888" opacity="0.6"/></svg>
<svg style="position:absolute;left:1855px;top:34px;" width="16" height="16" viewBox="0 0 16 16"><rect x="1.5" y="1.5" width="13" height="13" fill="#ccc" stroke="#444" stroke-width="0.8"/><rect x="2.0" y="2.0" width="2.4" height="2.4" fill="#9a2a2a"/><rect x="6.8" y="2.0" width="2.4" height="2.4" fill="#9a2a2a"/><rect x="11.6" y="2.0" width="2.4" height="2.4" fill="#9a2a2a"/><rect x="4.4" y="4.4" width="2.4" height="2.4" fill="#9a2a2a"/><rect x="9.2" y="4.4" width="2.4" height="2.4" fill="#9a2a2a"/><rect x="2.0" y="6.8" width="2.4" height="2.4" fill="#9a2a2a"/><rect x="6.8" y="6.8" width="2.4" height="2.4" fill="#9a2a2a"/><rect x="11.6" y="6.8" width="2.4" height="2.4" fill="#9a2a2a"/><rect x="4.4" y="9.2" width="2.4" height="2.4" fill="#9a2a2a"/><rect x="9.2" y="9.2" width="2.4" height="2.4" fill="#9a2a2a"/><rect x="2.0" y="11.6" width="2.4" height="2.4" fill="#9a2a2a"/><rect x="6.8" y="11.6" width="2.4" height="2.4" fill="#9a2a2a"/><rect x="11.6" y="11.6" width="2.4" height="2.4" fill="#9a2a2a"/></svg>
<svg style="position:absolute;left:1875px;top:34px;" width="16" height="16" viewBox="0 0 16 16"><path d="M4,1 L4.8,4.2 L8,5 L4.8,5.8 L4,9 L3.2,5.8 L0,5 L3.2,4.2 Z M11,1.5 L11.6,4 L14,4.6 L11.6,5.2 L11,7.7 L10.4,5.2 L8,4.6 L10.4,4 Z M6,7.5 L6.8,10.6 L10,11.5 L6.8,12.4 L6,15.5 L5.2,12.4 L2,11.5 L5.2,10.6 Z M12.5,10 L13,12 L15,12.5 L13,13 L12.5,15 L12,13 L10,12.5 L12,12 Z" fill="#f0e8b0" stroke="#6a6030" stroke-width="0.4"/></svg>
<svg style="position:absolute;left:1895px;top:34px;" width="16" height="16" viewBox="0 0 16 16"><path d="M2,8 L6,13 L14,4" stroke="#111" stroke-width="3.4" fill="none"/><path d="M2,8 L6,13 L14,4" stroke="#6a98d8" stroke-width="2" fill="none"/><circle cx="14" cy="4" r="2.5" fill="#ddd" stroke="#333" stroke-width="0.6"/></svg>
<svg style="position:absolute;left:1896px;top:28px;" width="16" height="16" viewBox="0 0 16 16"><path d="M1,0 L16,15 M5,0 L16,11 M9,0 L16,7" stroke="#bbb" stroke-width="0.9"/><path d="M0,0 L16,16 M4,0 L16,12 M8,0 L16,8" stroke="#222" stroke-width="0.6"/></svg>
<svg style="position:absolute;left:1634px;top:63px;" width="18" height="18" viewBox="0 0 18 18"><path d="M2,16 L7,11" stroke="#222" stroke-width="1.6"/><path d="M5,9 L9,13 L11,11 L10,8.5 L13.5,5 L14.5,6 L15.5,5 L12,1.5 L11,2.5 L12,3.5 L8.5,7 L6,6 Z" fill="#f0f0f0" stroke="#222" stroke-width="0.8"/></svg>
<svg style="position:absolute;left:1656px;top:64px;" width="16" height="16" viewBox="0 0 16 16"><circle cx="3" cy="3" r="2" fill="#f4f070" opacity="0.9"/><rect x="8" y="2" width="5" height="10" rx="2.5" fill="#4f7ec8" stroke="#111" stroke-width="0.8"/><circle cx="6" cy="11" r="3.6" fill="#e0e0e0" stroke="#111" stroke-width="0.8"/></svg>
<div class="t" style="left:1677px;top:67px;color:#000;font-size:11px;">Scene</div>
<div style="left:1630px;top:89px;width:277px;height:1px;background:#5a5a5a"></div>
<div style="left:1630px;top:90px;width:277px;height:1px;background:#7e7e7e"></div>
<svg style="position:absolute;left:1638px;top:98px;" width="8" height="9" viewBox="0 0 8 9"><path d="M0.5,0.5 L7.5,4.5 L0.5,8.5 Z" fill="#222"/></svg>
<div class="t" style="left:1650px;top:96px;color:#000;font-size:12.3px;">Render</div>
<svg style="position:absolute;left:1890px;top:100px;" width="10" height="5" viewBox="0 0 10 5"><rect x="0.0" y="0.0" width="1" height="1" fill="#555"/><rect x="0.0" y="2.5" width="1" height="1" fill="#555"/><rect x="2.5" y="0.0" width="1" height="1" fill="#555"/><rect x="2.5" y="2.5" width="1" height="1" fill="#555"/><rect x="5.0" y="0.0" width="1" height="1" fill="#555"/><rect x="5.0" y="2.5" width="1" height="1" fill="#555"/><rect x="7.5" y="0.0" width="1" height="1" fill="#555"/><rect x="7.5" y="2.5" width="1" height="1" fill="#555"/></svg>
<div style="left:1630px;top:113px;width:277px;height:1px;background:#5a5a5a"></div>
<div style="left:1630px;top:114px;width:277px;height:1px;background:#7e7e7e"></div>
<svg style="position:absolute;left:1638px;top:122px;" width="8" height="9" viewBox="0 0 8 9"><path d="M0.5,0.5 L7.5,4.5 L0.5,8.5 Z" fill="#222"/></svg>
<div class="t" style="left:1650px;top:120px;color:#000;font-size:12.3px;">Dimensions</div>
<svg style="position:absolute;left:1890px;top:124px;" width="10" height="5" viewBox="0 0 10 5"><rect x="0.0" y="0.0" width="1" height="1" fill="#555"/><rect x="0.0" y="2.5" width="1" height="1" fill="#555"/><rect x="2.5" y="0.0" width="1" height="1" fill="#555"/><rect x="2.5" y="2.5" width="1" height="1" fill="#555"/><rect x="5.0" y="0.0" width="1" height="1" fill="#555"/><rect x="5.0" y="2.5" width="1" height="1" fill="#555"/><rect x="7.5" y="0.0" width="1" height="1" fill="#555"/><rect x="7.5" y="2.5" width="1" height="1" fill="#555"/></svg>
<div style="left:1630px;top:137px;width:277px;height:1px;background:#5a5a5a"></div>
<div style="left:1630px;top:138px;width:277px;height:1px;background:#7e7e7e"></div>
<svg style="position:absolute;left:1638px;top:146px;" width="8" height="9" viewBox="0 0 8 9"><path d="M0.5,0.5 L7.5,4.5 L0.5,8.5 Z" fill="#222"/></svg>
<div class="t" style="left:1650px;top:144px;color:#000;font-size:12.3px;">Metadata</div>
<svg style="position:absolute;left:1890px;top:148px;" width="10" height="5" viewBox="0 0 10 5"><rect x="0.0" y="0.0" width="1" height="1" fill="#555"/><rect x="0.0" y="2.5" width="1" height="1" fill="#555"/><rect x="2.5" y="0.0" width="1" height="1" fill="#555"/><rect x="2.5" y="2.5" width="1" height="1" fill="#555"/><rect x="5.0" y="0.0" width="1" height="1" fill="#555"/><rect x="5.0" y="2.5" width="1" height="1" fill="#555"/><rect x="7.5" y="0.0" width="1" height="1" fill="#555"/><rect x="7.5" y="2.5" width="1" height="1" fill="#555"/></svg>
<div style="left:1630px;top:161px;width:277px;height:1px;background:#5a5a5a"></div>
<div style="left:1630px;top:162px;width:277px;height:1px;background:#7e7e7e"></div>
<svg style="position:absolute;left:1638px;top:170px;" width="8" height="9" viewBox="0 0 8 9"><path d="M0.5,0.5 L7.5,4.5 L0.5,8.5 Z" fill="#222"/></svg>
<div class="t" style="left:1650px;top:168px;color:#000;font-size:12.3px;">Output</div>
<svg style="position:absolute;left:1890px;top:172px;" width="10" height="5" viewBox="0 0 10 5"><rect x="0.0" y="0.0" width="1" height="1" fill="#555"/><rect x="0.0" y="2.5" width="1" height="1" fill="#555"/><rect x="2.5" y="0.0" width="1" height="1" fill="#555"/><rect x="2.5" y="2.5" width="1" height="1" fill="#555"/><rect x="5.0" y="0.0" width="1" height="1" fill="#555"/><rect x="5.0" y="2.5" width="1" height="1" fill="#555"/><rect x="7.5" y="0.0" width="1" height="1" fill="#555"/><rect x="7.5" y="2.5" width="1" height="1" fill="#555"/></svg>
<div style="left:1630px;top:185px;width:277px;height:1px;background:#5a5a5a"></div>
<div style="left:1630px;top:186px;width:277px;height:1px;background:#7e7e7e"></div>
<svg style="position:absolute;left:1638px;top:194px;" width="8" height="9" viewBox="0 0 8 9"><path d="M0.5,0.5 L7.5,4.5 L0.5,8.5 Z" fill="#222"/></svg>
<div style="left:1650px;top:191px;width:14px;height:14px;background:linear-gradient(#3a3a3a,#4e4e4e);border:1px solid #1a1a1a;border-radius:3px"></div>
<div class="t" style="left:1670px;top:192px;color:#000;font-size:12.3px;">Freestyle</div>
<svg style="position:absolute;left:1890px;top:196px;" width="10" height="5" viewBox="0 0 10 5"><rect x="0.0" y="0.0" width="1" height="1" fill="#555"/><rect x="0.0" y="2.5" width="1" height="1" fill="#555"/><rect x="2.5" y="0.0" width="1" height="1" fill="#555"/><rect x="2.5" y="2.5" width="1" height="1" fill="#555"/><rect x="5.0" y="0.0" width="1" height="1" fill="#555"/><rect x="5.0" y="2.5" width="1" height="1" fill="#555"/><rect x="7.5" y="0.0" width="1" height="1" fill="#555"/><rect x="7.5" y="2.5" width="1" height="1" fill="#555"/></svg>
<div style="left:1630px;top:209px;width:277px;height:1px;background:#5a5a5a"></div>
<div style="left:1630px;top:210px;width:277px;height:1px;background:#7e7e7e"></div>
<svg style="position:absolute;left:1638px;top:218px;" width="8" height="9" viewBox="0 0 8 9"><path d="M0.5,0.5 L7.5,4.5 L0.5,8.5 Z" fill="#222"/></svg>
<div class="t" style="left:1650px;top:216px;color:#000;font-size:12.3px;">Sampling</div>
<svg style="position:absolute;left:1890px;top:220px;" width="10" height="5" viewBox="0 0 10 5"><rect x="0.0" y="0.0" width="1" height="1" fill="#555"/><rect x="0.0" y="2.5" width="1" height="1" fill="#555"/><rect x="2.5" y="0.0" width="1" height="1" fill="#555"/><rect x="2.5" y="2.5" width="1" height="1" fill="#555"/><rect x="5.0" y="0.0" width="1" height="1" fill="#555"/><rect x="5.0" y="2.5" width="1" height="1" fill="#555"/><rect x="7.5" y="0.0" width="1" height="1" fill="#555"/><rect x="7.5" y="2.5" width="1" height="1" fill="#555"/></svg>
<div style="left:1630px;top:233px;width:277px;height:1px;background:#5a5a5a"></div>
<div style="left:1630px;top:234px;width:277px;height:1px;background:#7e7e7e"></div>
<svg style="position:absolute;left:1638px;top:242px;" width="8" height="9" viewBox="0 0 8 9"><path d="M0.5,0.5 L7.5,4.5 L0.5,8.5 Z" fill="#222"/></svg>
<div class="t" style="left:1650px;top:240px;color:#000;font-size:12.3px;">Geometry</div>
<svg style="position:absolute;left:1890px;top:244px;" width="10" height="5" viewBox="0 0 10 5"><rect x="0.0" y="0.0" width="1" height="1" fill="#555"/><rect x="0.0" y="2.5" width="1" height="1" fill="#555"/><rect x="2.5" y="0.0" width="1" height="1" fill="#555"/><rect x="2.5" y="2.5" width="1" height="1" fill="#555"/><rect x="5.0" y="0.0" width="1" height="1" fill="#555"/><rect x="5.0" y="2.5" width="1" height="1" fill="#555"/><rect x="7.5" y="0.0" width="1" height="1" fill="#555"/><rect x="7.5" y="2.5" width="1" height="1" fill="#555"/></svg>
<div style="left:1630px;top:257px;width:277px;height:1px;background:#5a5a5a"></div>
<div style="left:1630px;top:258px;width:277px;height:1px;background:#7e7e7e"></div>
<svg style="position:absolute;left:1638px;top:266px;" width="8" height="9" viewBox="0 0 8 9"><path d="M0.5,0.5 L7.5,4.5 L0.5,8.5 Z" fill="#222"/></svg>
<div class="t" style="left:1650px;top:264px;color:#000;font-size:12.3px;">Light Paths</div>
<svg style="position:absolute;left:1890px;top:268px;" width="10" height="5" viewBox="0 0 10 5"><rect x="0.0" y="0.0" width="1" height="1" fill="#555"/><rect x="0.0" y="2.5" width="1" height="1" fill="#555"/><rect x="2.5" y="0.0" width="1" height="1" fill="#555"/><rect x="2.5" y="2.5" width="1" height="1" fill="#555"/><rect x="5.0" y="0.0" width="1" height="1" fill="#555"/><rect x="5.0" y="2.5" width="1" height="1" fill="#555"/><rect x="7.5" y="0.0" width="1" height="1" fill="#555"/><rect x="7.5" y="2.5" width="1" height="1" fill="#555"/></svg>
<div style="left:1630px;top:281px;width:277px;height:1px;background:#5a5a5a"></div>
<div style="left:1630px;top:282px;width:277px;height:1px;background:#7e7e7e"></div>
<svg style="position:absolute;left:1638px;top:290px;" width="8" height="9" viewBox="0 0 8 9"><path d="M0.5,0.5 L7.5,4.5 L0.5,8.5 Z" fill="#222"/></svg>
<div style="left:1650px;top:287px;width:14px;height:14px;background:linear-gradient(#3a3a3a,#4e4e4e);border:1px solid #1a1a1a;border-radius:3px"></div>
<div class="t" style="left:1670px;top:288px;color:#000;font-size:12.3px;">Motion Blur</div>
<svg style="position:absolute;left:1890px;top:292px;" width="10" height="5" viewBox="0 0 10 5"><rect x="0.0" y="0.0" width="1" height="1" fill="#555"/><rect x="0.0" y="2.5" width="1" height="1" fill="#555"/><rect x="2.5" y="0.0" width="1" height="1" fill="#555"/><rect x="2.5" y="2.5" width="1" height="1" fill="#555"/><rect x="5.0" y="0.0" width="1" height="1" fill="#555"/><rect x="5.0" y="2.5" width="1" height="1" fill="#555"/><rect x="7.5" y="0.0" width="1" height="1" fill="#555"/><rect x="7.5" y="2.5" width="1" height="1" fill="#555"/></svg>
<div style="left:1630px;top:305px;width:277px;height:1px;background:#5a5a5a"></div>
<div style="left:1630px;top:306px;width:277px;height:1px;background:#7e7e7e"></div>
<svg style="position:absolute;left:1638px;top:314px;" width="8" height="9" viewBox="0 0 8 9"><path d="M0.5,0.5 L7.5,4.5 L0.5,8.5 Z" fill="#222"/></svg>
<div class="t" style="left:1650px;top:312px;color:#000;font-size:12.3px;">Film</div>
<svg style="position:absolute;left:1890px;top:316px;" width="10" height="5" viewBox="0 0 10 5"><rect x="0.0" y="0.0" width="1" height="1" fill="#555"/><rect x="0.0" y="2.5" width="1" height="1" fill="#555"/><rect x="2.5" y="0.0" width="1" height="1" fill="#555"/><rect x="2.5" y="2.5" width="1" height="1" fill="#555"/><rect x="5.0" y="0.0" width="1" height="1" fill="#555"/><rect x="5.0" y="2.5" width="1" height="1" fill="#555"/><rect x="7.5" y="0.0" width="1" height="1" fill="#555"/><rect x="7.5" y="2.5" width="1" height="1" fill="#555"/></svg>
<div style="left:1630px;top:329px;width:277px;height:1px;background:#5a5a5a"></div>
<div style="left:1630px;top:330px;width:277px;height:1px;background:#7e7e7e"></div>
<svg style="position:absolute;left:1638px;top:338px;" width="8" height="9" viewBox="0 0 8 9"><path d="M0.5,0.5 L7.5,4.5 L0.5,8.5 Z" fill="#222"/></svg>
<div class="t" style="left:1650px;top:336px;color:#000;font-size:12.3px;">Performance</div>
<svg style="position:absolute;left:1890px;top:340px;" width="10" height="5" viewBox="0 0 10 5"><rect x="0.0" y="0.0" width="1" height="1" fill="#555"/><rect x="0.0" y="2.5" width="1" height="1" fill="#555"/><rect x="2.5" y="0.0" width="1" height="1" fill="#555"/><rect x="2.5" y="2.5" width="1" height="1" fill="#555"/><rect x="5.0" y="0.0" width="1" height="1" fill="#555"/><rect x="5.0" y="2.5" width="1" height="1" fill="#555"/><rect x="7.5" y="0.0" width="1" height="1" fill="#555"/><rect x="7.5" y="2.5" width="1" height="1" fill="#555"/></svg>
<div style="left:1630px;top:353px;width:277px;height:1px;background:#5a5a5a"></div>
<div style="left:1630px;top:354px;width:277px;height:1px;background:#7e7e7e"></div>
<svg style="position:absolute;left:1638px;top:362px;" width="8" height="9" viewBox="0 0 8 9"><path d="M0.5,0.5 L7.5,4.5 L0.5,8.5 Z" fill="#222"/></svg>
<div class="t" style="left:1650px;top:360px;color:#000;font-size:12.3px;">Post Processing</div>
<svg style="position:absolute;left:1890px;top:364px;" width="10" height="5" viewBox="0 0 10 5"><rect x="0.0" y="0.0" width="1" height="1" fill="#555"/><rect x="0.0" y="2.5" width="1" height="1" fill="#555"/><rect x="2.5" y="0.0" width="1" height="1" fill="#555"/><rect x="2.5" y="2.5" width="1" height="1" fill="#555"/><rect x="5.0" y="0.0" width="1" height="1" fill="#555"/><rect x="5.0" y="2.5" width="1" height="1" fill="#555"/><rect x="7.5" y="0.0" width="1" height="1" fill="#555"/><rect x="7.5" y="2.5" width="1" height="1" fill="#555"/></svg>
<div style="left:1630px;top:377px;width:277px;height:1px;background:#5a5a5a"></div>
<div style="left:1630px;top:378px;width:277px;height:1px;background:#7e7e7e"></div>
<svg style="position:absolute;left:1638px;top:386px;" width="8" height="9" viewBox="0 0 8 9"><path d="M0.5,0.5 L7.5,4.5 L0.5,8.5 Z" fill="#222"/></svg>
<div class="t" style="left:1650px;top:384px;color:#000;font-size:12.3px;">Bake</div>
<svg style="position:absolute;left:1890px;top:388px;" width="10" height="5" viewBox="0 0 10 5"><rect x="0.0" y="0.0" width="1" height="1" fill="#555"/><rect x="0.0" y="2.5" width="1" height="1" fill="#555"/><rect x="2.5" y="0.0" width="1" height="1" fill="#555"/><rect x="2.5" y="2.5" width="1" height="1" fill="#555"/><rect x="5.0" y="0.0" width="1" height="1" fill="#555"/><rect x="5.0" y="2.5" width="1" height="1" fill="#555"/><rect x="7.5" y="0.0" width="1" height="1" fill="#555"/><rect x="7.5" y="2.5" width="1" height="1" fill="#555"/></svg>
<svg style="position:absolute;left:1625px;top:1130px;" width="14" height="15" viewBox="0 0 14 15"><path d="M0,1 L14,15 M0,5 L10,15 M0,9 L6,15" stroke="#bbb" stroke-width="0.9"/><path d="M0,0 L15,15 M0,4 L11,15 M0,8 L7,15" stroke="#222" stroke-width="0.6"/></svg>
<div style="left:0px;top:0px;width:1912px;height:27px;background:#686868;border-top:2px solid #7a7a7a"></div>
<div style="left:0px;top:27px;width:1912px;height:1px;background:#000"></div>
<div style="left:9px;top:4px;width:32px;height:20px;background:linear-gradient(#545454,#3f3f3f);border:1px solid #161616;border-radius:4px;"></div>
<svg style="position:absolute;left:14px;top:7px;" width="14" height="14" viewBox="0 0 14 14"><circle cx="7" cy="7" r="6.2" fill="#3f68a8" stroke="#0a0a0a" stroke-width="1.2"/><circle cx="7" cy="7" r="4.8" fill="none" stroke="#8fb0e0" stroke-width="0.6"/><rect x="6" y="6" width="2.2" height="4.5" fill="#fff"/><rect x="5.3" y="10" width="3.6" height="1" fill="#fff"/><circle cx="7.1" cy="4.2" r="1.1" fill="#fff"/></svg>
<svg style="position:absolute;left:31px;top:7px;" width="7" height="14" viewBox="0 0 7 14"><path d="M0.5,5.5 L3.5,0.5 L6.5,5.5 Z M0.5,8.5 L3.5,13.5 L6.5,8.5 Z" fill="#c8c8c8"/></svg>
<div class="t" style="left:53px;top:9px;color:#000;font-size:11px;">File</div>
<div class="t" style="left:91px;top:9px;color:#000;font-size:11px;">Render</div>
<div class="t" style="left:146px;top:9px;color:#000;font-size:11px;">Window</div>
<div class="t" style="left:205px;top:9px;color:#000;font-size:11px;">Help</div>
<div style="left:242px;top:4px;width:34px;height:20px;background:linear-gradient(#545454,#3f3f3f);border:1px solid #161616;border-radius:4px;border-radius:4px 0 0 4px"></div>
<svg style="position:absolute;left:247px;top:7px;" width="14" height="14" viewBox="0 0 14 14"><rect x="0.5" y="0.5" width="5" height="5.5" fill="#e8e8e8" stroke="#111"/><rect x="0.5" y="7" width="5" height="6.5" fill="#e8e8e8" stroke="#111"/><rect x="6.5" y="0.5" width="6.5" height="13" fill="#e8e8e8" stroke="#111"/></svg>
<svg style="position:absolute;left:264px;top:7px;" width="7" height="14" viewBox="0 0 7 14"><path d="M0.5,5.5 L3.5,0.5 L6.5,5.5 Z M0.5,8.5 L3.5,13.5 L6.5,8.5 Z" fill="#c8c8c8"/></svg>
<div style="left:274px;top:4px;width:120px;height:20px;background:linear-gradient(#b4b4b4,#a2a2a2);border:1px solid #1a1a1a;border-left:none"></div>
<div class="t" style="left:282px;top:9px;color:#000;font-size:11px;">Default</div>
<div style="left:393px;top:4px;width:21px;height:20px;background:linear-gradient(#a8a8a8,#989898);border:1px solid #1a1a1a"></div><svg style="position:absolute;left:397px;top:7px;" width="12" height="12" viewBox="0 0 12 12"><path d="M6,0.8 V11.2 M0.8,6 H11.2" stroke="#111" stroke-width="3.8"/><path d="M6,1.6 V10.4 M1.6,6 H10.4" stroke="#fff" stroke-width="2"/></svg>
<div style="left:413px;top:4px;width:20px;height:20px;background:linear-gradient(#a8a8a8,#989898);border:1px solid #1a1a1a;border-radius:0 4px 4px 0;"></div><svg style="position:absolute;left:417px;top:7px;" width="12" height="12" viewBox="0 0 12 12"><path d="M1.8,1.8 L10.2,10.2 M10.2,1.8 L1.8,10.2" stroke="#111" stroke-width="3.8"/><path d="M2.4,2.4 L9.6,9.6 M9.6,2.4 L2.4,9.6" stroke="#fff" stroke-width="2"/></svg>
<div style="left:440px;top:4px;width:32px;height:20px;background:linear-gradient(#545454,#3f3f3f);border:1px solid #161616;border-radius:4px;border-radius:4px 0 0 4px"></div>
<svg style="position:absolute;left:444px;top:6px;" width="16" height="16" viewBox="0 0 16 16"><circle cx="3" cy="3" r="2" fill="#f4f070" opacity="0.9"/><rect x="8" y="2" width="5" height="10" rx="2.5" fill="#4f7ec8" stroke="#111" stroke-width="0.8"/><circle cx="6" cy="11" r="3.6" fill="#e0e0e0" stroke="#111" stroke-width="0.8"/></svg>
<svg style="position:absolute;left:461px;top:7px;" width="7" height="14" viewBox="0 0 7 14"><path d="M0.5,5.5 L3.5,0.5 L6.5,5.5 Z M0.5,8.5 L3.5,13.5 L6.5,8.5 Z" fill="#c8c8c8"/></svg>
<div style="left:470px;top:4px;width:121px;height:20px;background:linear-gradient(#b4b4b4,#a2a2a2);border:1px solid #1a1a1a;border-left:none"></div>
<div class="t" style="left:478px;top:9px;color:#000;font-size:11px;">Scene</div>
<div style="left:590px;top:4px;width:21px;height:20px;background:linear-gradient(#a8a8a8,#989898);border:1px solid #1a1a1a"></div><svg style="position:absolute;left:594px;top:7px;" width="12" height="12" viewBox="0 0 12 12"><path d="M6,0.8 V11.2 M0.8,6 H11.2" stroke="#111" stroke-width="3.8"/><path d="M6,1.6 V10.4 M1.6,6 H10.4" stroke="#fff" stroke-width="2"/></svg>
<div style="left:610px;top:4px;width:20px;height:20px;background:linear-gradient(#a8a8a8,#989898);border:1px solid #1a1a1a;border-radius:0 4px 4px 0;"></div><svg style="position:absolute;left:614px;top:7px;" width="12" height="12" viewBox="0 0 12 12"><path d="M1.8,1.8 L10.2,10.2 M10.2,1.8 L1.8,10.2" stroke="#111" stroke-width="3.8"/><path d="M2.4,2.4 L9.6,9.6 M9.6,2.4 L2.4,9.6" stroke="#fff" stroke-width="2"/></svg>
<div style="left:647px;top:4px;width:111px;height:20px;background:linear-gradient(#545454,#3f3f3f);border:1px solid #161616;border-radius:4px;"></div>
<div class="t" style="left:655px;top:9px;color:#fff;font-size:11px;">Cycles Render</div>
<svg style="position:absolute;left:746px;top:7px;" width="7" height="14" viewBox="0 0 7 14"><path d="M0.5,5.5 L3.5,0.5 L6.5,5.5 Z M0.5,8.5 L3.5,13.5 L6.5,8.5 Z" fill="#c8c8c8"/></svg>
<svg style="position:absolute;left:775px;top:6px;" width="18" height="16" viewBox="0 0 18 16"><path d="M1,9 L8,4 L5,1 L12,3 C16,4 17,8 16,11 C14,15 8,15 6,12 L2,14 L4,10 Z" fill="#e87d0d" stroke="#2a1500" stroke-width="0.6"/><circle cx="11" cy="9" r="3.4" fill="#fff"/><circle cx="11" cy="9" r="2" fill="#2a6bb8"/></svg>
<div class="t" style="left:802px;top:9px;color:#000;font-size:11px;letter-spacing:0.23px">v2.79 | Verts:3,848 | Faces:3,840 | Tris:7,680 | Objects:0/5 | Lamps:0/0 | Mem:10.84M | Suzanne</div>
<svg style="position:absolute;left:0px;top:14px;" width="12" height="13" viewBox="0 0 12 13"><path d="M0,3 L10,13 M0,7 L6,13 M0,11 L2,13" stroke="#a0a0a0" stroke-width="1"/><path d="M0,2 L11,13 M0,6 L7,13 M0,10 L3,13" stroke="#222" stroke-width="0.7"/></svg>
<div style="left:0px;top:514px;width:1624px;height:26px;background:#737373;border-top:1px solid #8a8a8a"></div>
<div style="left:0px;top:540px;width:1624px;height:1px;background:#000"></div>
<div style="left:9px;top:518px;width:32px;height:19px;background:linear-gradient(#545454,#3f3f3f);border:1px solid #161616;border-radius:4px;"></div>
<svg style="position:absolute;left:13px;top:520px;" width="15" height="15" viewBox="0 0 15 15"><path d="M7.5,1 L13.5,3.8 L13.5,11 L7.5,14 L1.5,11 L1.5,3.8 Z" fill="#d8d8d8" stroke="#111" stroke-width="0.9"/><path d="M7.5,7 L13.5,3.8 L13.5,11 L7.5,14 Z" fill="#9a9a9a"/><path d="M1.5,3.8 L7.5,7 L13.5,3.8" stroke="#fff" stroke-width="0.6" fill="none"/></svg>
<svg style="position:absolute;left:31px;top:521px;" width="7" height="14" viewBox="0 0 7 14"><path d="M0.5,5.5 L3.5,0.5 L6.5,5.5 Z M0.5,8.5 L3.5,13.5 L6.5,8.5 Z" fill="#c8c8c8"/></svg>
<div class="t" style="left:53px;top:522px;color:#000;font-size:11px;">View</div>
<div class="t" style="left:98px;top:522px;color:#000;font-size:11px;">Select</div>
<div class="t" style="left:149px;top:522px;color:#000;font-size:11px;">Add</div>
<div class="t" style="left:188px;top:522px;color:#000;font-size:11px;">Object</div>
<div style="left:235px;top:518px;width:112px;height:19px;background:linear-gradient(#545454,#3f3f3f);border:1px solid #161616;border-radius:4px;"></div>
<svg style="position:absolute;left:240px;top:521px;" width="13" height="13" viewBox="0 0 13 13"><path d="M6.5,0.8 L12,3.5 L12,9.5 L6.5,12.2 L1,9.5 L1,3.5 Z" fill="#e09040" stroke="#1a1a1a" stroke-width="0.9"/><path d="M1,3.5 L6.5,6.3 L12,3.5 M6.5,6.3 V12.2" stroke="#fff3d0" stroke-width="0.7" fill="none"/><path d="M6.5,6.3 L12,3.5 L12,9.5 L6.5,12.2 Z" fill="#b86a24"/></svg>
<div class="t" style="left:258px;top:522px;color:#fff;font-size:11px;">Object Mode</div>
<svg style="position:absolute;left:336px;top:521px;" width="7" height="14" viewBox="0 0 7 14"><path d="M0.5,5.5 L3.5,0.5 L6.5,5.5 Z M0.5,8.5 L3.5,13.5 L6.5,8.5 Z" fill="#c8c8c8"/></svg>
<div style="left:353px;top:518px;width:31px;height:19px;background:linear-gradient(#545454,#3f3f3f);border:1px solid #161616;border-radius:4px;"></div>
<svg style="position:absolute;left:357px;top:520px;" width="14" height="14" viewBox="0 0 14 14"><defs><radialGradient id="wsph" cx="0.4" cy="0.35" r="0.7"><stop offset="0" stop-color="#fff"/><stop offset="1" stop-color="#bbb"/></radialGradient></defs><circle cx="7" cy="7" r="5.8" fill="url(#wsph)" stroke="#111" stroke-width="0.8"/></svg>
<svg style="position:absolute;left:373px;top:521px;" width="7" height="14" viewBox="0 0 7 14"><path d="M0.5,5.5 L3.5,0.5 L6.5,5.5 Z M0.5,8.5 L3.5,13.5 L6.5,8.5 Z" fill="#c8c8c8"/></svg>
<div style="left:390px;top:518px;width:31px;height:19px;background:linear-gradient(#545454,#3f3f3f);border:1px solid #161616;border-radius:4px;border-radius:4px 0 0 4px"></div>
<svg style="position:absolute;left:393px;top:520px;" width="15" height="15" viewBox="0 0 15 15"><circle cx="5" cy="5" r="3.8" fill="#eee" stroke="#111" stroke-width="0.8"/><circle cx="10" cy="10" r="3.8" fill="#eee" stroke="#111" stroke-width="0.8"/><rect x="5.5" y="5.5" width="4" height="4" fill="#4a7cd0" stroke="#fff" stroke-width="0.6"/></svg>
<svg style="position:absolute;left:410px;top:521px;" width="7" height="14" viewBox="0 0 7 14"><path d="M0.5,5.5 L3.5,0.5 L6.5,5.5 Z M0.5,8.5 L3.5,13.5 L6.5,8.5 Z" fill="#c8c8c8"/></svg>
<div style="left:420px;top:518px;width:20px;height:19px;background:linear-gradient(#a8a8a8,#989898);border:1px solid #1a1a1a;border-radius:0 4px 4px 0"></div>
<svg style="position:absolute;left:422px;top:520px;" width="16" height="15" viewBox="0 0 16 15"><circle cx="4" cy="3" r="1.2" fill="#fff" stroke="#111" stroke-width="0.5"/><circle cx="8" cy="3" r="1.2" fill="#fff" stroke="#111" stroke-width="0.5"/><circle cx="12" cy="3" r="1.2" fill="#fff" stroke="#111" stroke-width="0.5"/><path d="M2,10 H14 M2,10 L4.5,7.5 M2,10 L4.5,12.5 M14,10 L11.5,7.5 M14,10 L11.5,12.5" stroke="#111" stroke-width="2.2" fill="none"/><path d="M2,10 H14 M2,10 L4.5,7.5 M2,10 L4.5,12.5 M14,10 L11.5,7.5 M14,10 L11.5,12.5" stroke="#fff" stroke-width="1" fill="none"/></svg>
<div style="left:446px;top:518px;width:80px;height:19px;background:linear-gradient(#545454,#3f3f3f);border:1px solid #161616;border-radius:4px;"></div>
<div style="left:465px;top:518px;width:20px;height:19px;background:linear-gradient(#6e9ae0,#5680c2);border:1px solid #1a1a1a"></div>
<svg style="position:absolute;left:449px;top:520px;" width="15" height="15" viewBox="0 0 15 15"><path d="M7.5,8 V1.5" stroke="#fff" stroke-width="1.5"/><path d="M7.5,8 L2,13" stroke="#e03030" stroke-width="1.8"/><path d="M7.5,8 L13,13" stroke="#60d040" stroke-width="1.8"/></svg>
<svg style="position:absolute;left:468px;top:520px;" width="15" height="15" viewBox="0 0 15 15"><path d="M2,13 L11,4" stroke="#111" stroke-width="2.6"/><path d="M2,13 L11,4" stroke="#c8dcff" stroke-width="1.2"/><path d="M7,2.5 L12.5,2.5 L12.5,8 Z" fill="#c8dcff" stroke="#111" stroke-width="0.8"/></svg>
<svg style="position:absolute;left:488px;top:520px;" width="15" height="15" viewBox="0 0 15 15"><path d="M2,13 C3,6 7,3 13,3" stroke="#5c88d0" stroke-width="2" fill="none"/></svg>
<svg style="position:absolute;left:508px;top:520px;" width="15" height="15" viewBox="0 0 15 15"><path d="M2,13 L9,6" stroke="#5c88d0" stroke-width="2"/><rect x="8" y="2" width="5" height="5" fill="#5c88d0"/></svg>
<div style="left:525px;top:518px;width:73px;height:19px;background:linear-gradient(#545454,#3f3f3f);border:1px solid #161616;border-radius:4px;border-radius:0 4px 4px 0"></div>
<div class="t" style="left:533px;top:522px;color:#fff;font-size:11px;">Local</div>
<svg style="position:absolute;left:587px;top:521px;" width="7" height="14" viewBox="0 0 7 14"><path d="M0.5,5.5 L3.5,0.5 L6.5,5.5 Z M0.5,8.5 L3.5,13.5 L6.5,8.5 Z" fill="#c8c8c8"/></svg>
<div style="left:603px;top:518px;width:50px;height:19px;background:#1e1e1e;border:1px solid #1e1e1e;border-radius:4px;overflow:hidden"><div style="left:0.0px;top:0.0px;width:8.8px;height:7.8px;background:linear-gradient(#ababab,#9c9c9c)"></div><div style="left:0.0px;top:8.8px;width:8.8px;height:7.8px;background:linear-gradient(#ababab,#9c9c9c)"></div><div style="left:9.8px;top:0.0px;width:8.8px;height:7.8px;background:linear-gradient(#ababab,#9c9c9c)"></div><div style="left:9.8px;top:8.8px;width:8.8px;height:7.8px;background:linear-gradient(#ababab,#9c9c9c)"></div><div style="left:19.6px;top:0.0px;width:8.8px;height:7.8px;background:linear-gradient(#ababab,#9c9c9c)"></div><div style="left:19.6px;top:8.8px;width:8.8px;height:7.8px;background:linear-gradient(#ababab,#9c9c9c)"></div><div style="left:29.4px;top:0.0px;width:8.8px;height:7.8px;background:linear-gradient(#ababab,#9c9c9c)"></div><div style="left:29.4px;top:8.8px;width:8.8px;height:7.8px;background:linear-gradient(#ababab,#9c9c9c)"></div><div style="left:39.2px;top:0.0px;width:8.8px;height:7.8px;background:linear-gradient(#ababab,#9c9c9c)"></div><div style="left:39.2px;top:8.8px;width:8.8px;height:7.8px;background:linear-gradient(#ababab,#9c9c9c)"></div></div>
<div style="left:658px;top:518px;width:50px;height:19px;background:#1e1e1e;border:1px solid #1e1e1e;border-radius:4px;overflow:hidden"><div style="left:0.0px;top:0.0px;width:8.8px;height:7.8px;background:linear-gradient(#ababab,#9c9c9c)"></div><div style="left:0.0px;top:8.8px;width:8.8px;height:7.8px;background:linear-gradient(#ababab,#9c9c9c)"></div><div style="left:9.8px;top:0.0px;width:8.8px;height:7.8px;background:linear-gradient(#ababab,#9c9c9c)"></div><div style="left:9.8px;top:8.8px;width:8.8px;height:7.8px;background:linear-gradient(#ababab,#9c9c9c)"></div><div style="left:19.6px;top:0.0px;width:8.8px;height:7.8px;background:linear-gradient(#ababab,#9c9c9c)"></div><div style="left:19.6px;top:8.8px;width:8.8px;height:7.8px;background:linear-gradient(#ababab,#9c9c9c)"></div><div style="left:29.4px;top:0.0px;width:8.8px;height:7.8px;background:linear-gradient(#ababab,#9c9c9c)"></div><div style="left:29.4px;top:8.8px;width:8.8px;height:7.8px;background:linear-gradient(#ababab,#9c9c9c)"></div><div style="left:39.2px;top:0.0px;width:8.8px;height:7.8px;background:linear-gradient(#ababab,#9c9c9c)"></div><div style="left:39.2px;top:8.8px;width:8.8px;height:7.8px;background:linear-gradient(#ababab,#9c9c9c)"></div></div>
<svg style="position:absolute;left:605px;top:520px;" width="18" height="8" viewBox="0 0 18 8"><circle cx="2.5" cy="2.5" r="1.8" fill="#2a2a2a"/><circle cx="11.5" cy="2.5" r="1.8" fill="#e0a060"/></svg>
<div style="left:713px;top:518px;width:20px;height:19px;background:linear-gradient(#a8a8a8,#989898);border:1px solid #1a1a1a;border-radius:4px"></div>
<svg style="position:absolute;left:716px;top:520px;" width="15" height="15" viewBox="0 0 15 15"><rect x="1.5" y="1.5" width="9" height="10" fill="#ccc" stroke="#333"/><path d="M11,7 C14,7 14,11 11,11 M11,10 C14,10 14,14 11,14" stroke="#111" stroke-width="1.3" fill="none"/></svg>
<div style="left:739px;top:518px;width:20px;height:19px;background:linear-gradient(#a8a8a8,#989898);border:1px solid #1a1a1a;border-radius:4px 0 0 4px"></div>
<svg style="position:absolute;left:742px;top:520px;" width="15" height="15" viewBox="0 0 15 15"><path d="M4,12 L2,9 C0,5 4,1 8,3 L12,7 L10,9 L6,5 C5,4 3,5 4,7 L6,10 Z" fill="#d8d8d8" stroke="#555" stroke-width="0.8"/></svg>
<div style="left:758px;top:518px;width:33px;height:19px;background:linear-gradient(#474747,#3a3a3a);border:1px solid #1a1a1a"></div>
<svg style="position:absolute;left:761px;top:520px;" width="16" height="15" viewBox="0 0 16 15"><path d="M2,7.5 H14 M4,4 V11 M12,4 V11 M7,3 V12 M9,3 V12" stroke="#fff" stroke-width="1.2"/></svg>
<svg style="position:absolute;left:780px;top:521px;" width="7" height="14" viewBox="0 0 7 14"><path d="M0.5,5.5 L3.5,0.5 L6.5,5.5 Z M0.5,8.5 L3.5,13.5 L6.5,8.5 Z" fill="#c8c8c8"/></svg>
<div style="left:790px;top:518px;width:20px;height:19px;background:linear-gradient(#a8a8a8,#989898);border:1px solid #1a1a1a;border-radius:0 4px 4px 0"></div>
<svg style="position:absolute;left:792px;top:520px;" width="16" height="15" viewBox="0 0 16 15"><circle cx="6" cy="5" r="3.5" fill="#4a88e0" stroke="#fff" stroke-width="1"/><path d="M3,10 H15 M3,13 H15 M8,8 V15 M12,8 V15" stroke="#111" stroke-width="1"/></svg>
<div style="left:816px;top:518px;width:39px;height:19px;background:linear-gradient(#545454,#3f3f3f);border:1px solid #161616;border-radius:4px;"></div>
<svg style="position:absolute;left:818px;top:520px;" width="16" height="15" viewBox="0 0 16 15"><rect x="1" y="4" width="13" height="9" fill="#ddd" stroke="#111"/><circle cx="8" cy="9" r="3" fill="#c04040" stroke="#111"/><path d="M12,1 V5 M10,3 H14" stroke="#f8e040" stroke-width="1.4"/></svg>
<svg style="position:absolute;left:837px;top:520px;" width="16" height="15" viewBox="0 0 16 15"><rect x="1" y="6" width="13" height="8" fill="#ddd" stroke="#111"/><path d="M1,3 L13,1 L14,4 L2,6 Z" fill="#eee" stroke="#111" stroke-width="0.8"/><rect x="3" y="8" width="3" height="3" fill="#4a88e0"/></svg>
<svg style="position:absolute;left:0px;top:527px;" width="12" height="13" viewBox="0 0 12 13"><path d="M0,3 L10,13 M0,7 L6,13 M0,11 L2,13" stroke="#a0a0a0" stroke-width="1"/><path d="M0,2 L11,13 M0,6 L7,13 M0,10 L3,13" stroke="#222" stroke-width="0.7"/></svg>
<div style="left:0px;top:1119px;width:1624px;height:26px;background:#686868;border-top:1px solid #7c7c7c"></div>
<div style="left:8px;top:1123px;width:32px;height:20px;background:linear-gradient(#545454,#3f3f3f);border:1px solid #161616;border-radius:4px;"></div>
<svg style="position:absolute;left:12px;top:1125px;" width="16" height="16" viewBox="0 0 16 16"><rect x="1" y="1" width="7" height="5" fill="#eee" stroke="#111"/><rect x="1" y="9" width="7" height="5" fill="#eee" stroke="#111"/><path d="M8,3.5 C14,3.5 14,11.5 8,11.5" stroke="#5080d0" stroke-width="1.3" fill="none"/></svg>
<svg style="position:absolute;left:30px;top:1126px;" width="7" height="14" viewBox="0 0 7 14"><path d="M0.5,5.5 L3.5,0.5 L6.5,5.5 Z M0.5,8.5 L3.5,13.5 L6.5,8.5 Z" fill="#c8c8c8"/></svg>
<div class="t" style="left:52px;top:1127px;color:#000;font-size:11px;">View</div>
<div class="t" style="left:97px;top:1127px;color:#000;font-size:11px;">Select</div>
<div class="t" style="left:148px;top:1127px;color:#000;font-size:11px;">Add</div>
<div class="t" style="left:187px;top:1127px;color:#000;font-size:11px;">Node</div>
<div style="left:226px;top:1123px;width:80px;height:20px;background:linear-gradient(#545454,#3f3f3f);border:1px solid #161616;border-radius:4px;"></div>
<div style="left:285px;top:1123px;width:21px;height:20px;background:linear-gradient(#6e9ae0,#5680c2);border:1px solid #1a1a1a;border-radius:0 4px 4px 0"></div>
<svg style="position:absolute;left:229px;top:1125px;" width="15" height="15" viewBox="0 0 15 15"><path d="M4,3 L7,5.5 L4,8 L1,5.5 Z M11,3 L14,5.5 L11,8 L8,5.5 Z M7.5,9 L10.5,11.5 L7.5,14 L4.5,11.5 Z" fill="#ddd" stroke="#222" stroke-width="0.6"/></svg>
<svg style="position:absolute;left:248px;top:1125px;" width="15" height="15" viewBox="0 0 15 15"><rect x="3" y="4" width="10" height="10" fill="#e8d8a0" stroke="#333" stroke-width="0.8"/><rect x="1" y="1" width="10" height="10" fill="#c8d0e0" stroke="#333" stroke-width="0.8"/><rect x="4" y="3" width="3" height="6" fill="#4070c0"/></svg>
<svg style="position:absolute;left:268px;top:1125px;" width="15" height="15" viewBox="0 0 15 15"><rect x="1.0" y="1.0" width="3.2" height="3.2" fill="#b03030"/><rect x="4.2" y="1.0" width="3.2" height="3.2" fill="#eee"/><rect x="7.4" y="1.0" width="3.2" height="3.2" fill="#b03030"/><rect x="10.6" y="1.0" width="3.2" height="3.2" fill="#eee"/><rect x="1.0" y="4.2" width="3.2" height="3.2" fill="#eee"/><rect x="4.2" y="4.2" width="3.2" height="3.2" fill="#b03030"/><rect x="7.4" y="4.2" width="3.2" height="3.2" fill="#eee"/><rect x="10.6" y="4.2" width="3.2" height="3.2" fill="#b03030"/><rect x="1.0" y="7.4" width="3.2" height="3.2" fill="#b03030"/><rect x="4.2" y="7.4" width="3.2" height="3.2" fill="#eee"/><rect x="7.4" y="7.4" width="3.2" height="3.2" fill="#b03030"/><rect x="10.6" y="7.4" width="3.2" height="3.2" fill="#eee"/><rect x="1.0" y="10.6" width="3.2" height="3.2" fill="#eee"/><rect x="4.2" y="10.6" width="3.2" height="3.2" fill="#b03030"/><rect x="7.4" y="10.6" width="3.2" height="3.2" fill="#eee"/><rect x="10.6" y="10.6" width="3.2" height="3.2" fill="#b03030"/></svg>
<svg style="position:absolute;left:288px;top:1125px;" width="15" height="15" viewBox="0 0 15 15"><circle cx="7.5" cy="7.5" r="6" fill="#555" stroke="#111"/><path d="M7.5,1.5 A6,6 0 0 1 13.5,7.5 L7.5,7.5 Z" fill="#eee"/><path d="M1.5,7.5 A6,6 0 0 0 7.5,13.5 L7.5,7.5 Z" fill="#d06050"/></svg>
<div style="left:311px;top:1123px;width:60px;height:20px;background:linear-gradient(#545454,#3f3f3f);border:1px solid #161616;border-radius:4px;"></div>
<div style="left:330px;top:1123px;width:21px;height:20px;background:linear-gradient(#6e9ae0,#5680c2);border:1px solid #1a1a1a"></div>
<svg style="position:absolute;left:314px;top:1126px;" width="14" height="14" viewBox="0 0 14 14"><path d="M6.5,0.8 L12,3.5 L12,9.5 L6.5,12.2 L1,9.5 L1,3.5 Z" fill="#e09040" stroke="#1a1a1a" stroke-width="0.9"/><path d="M1,3.5 L6.5,6.3 L12,3.5 M6.5,6.3 V12.2" stroke="#fff3d0" stroke-width="0.7" fill="none"/><path d="M6.5,6.3 L12,3.5 L12,9.5 L6.5,12.2 Z" fill="#b86a24"/></svg>
<svg style="position:absolute;left:333px;top:1125px;" width="15" height="15" viewBox="0 0 15 15"><circle cx="7.5" cy="7.5" r="6" fill="#4a80c8" stroke="#111"/><path d="M3,5 C5,3 7,6 6,9 C5,11 3,9 3,7 Z M9,3 C11,4 12,7 10,10 L9,8 Z" fill="#5a9a40"/></svg>
<svg style="position:absolute;left:353px;top:1125px;" width="15" height="15" viewBox="0 0 15 15"><path d="M2,13 L4,10 L12,2 L13.5,3.5 L5,12 Z" fill="#6080b0" stroke="#222" stroke-width="0.6"/></svg>
<div style="left:377px;top:1123px;width:32px;height:20px;background:linear-gradient(#545454,#3f3f3f);border:1px solid #161616;border-radius:4px;border-radius:4px 0 0 4px"></div>
<svg style="position:absolute;left:381px;top:1125px;" width="15" height="15" viewBox="0 0 15 15"><circle cx="7.5" cy="7.5" r="6" fill="#4a80c8" stroke="#111"/><path d="M3,5 C5,3 7,6 6,9 C5,11 3,9 3,7 Z M9,3 C11,4 12,7 10,10 L9,8 Z" fill="#5a9a40"/></svg>
<svg style="position:absolute;left:398px;top:1126px;" width="7" height="14" viewBox="0 0 7 14"><path d="M0.5,5.5 L3.5,0.5 L6.5,5.5 Z M0.5,8.5 L3.5,13.5 L6.5,8.5 Z" fill="#c8c8c8"/></svg>
<div style="left:408px;top:1123px;width:121px;height:20px;background:linear-gradient(#b4b4b4,#a2a2a2);border:1px solid #1a1a1a;border-left:none"></div>
<div class="t" style="left:415px;top:1127px;color:#000;font-size:11px;">World</div>
<div style="left:528px;top:1123px;width:20px;height:20px;background:linear-gradient(#a8a8a8,#989898);border:1px solid #1a1a1a"></div>
<div class="t" style="left:534px;top:1127px;color:#000;font-size:11px;">F</div>
<div style="left:547px;top:1123px;width:21px;height:20px;background:linear-gradient(#a8a8a8,#989898);border:1px solid #1a1a1a"></div><svg style="position:absolute;left:551px;top:1126px;" width="12" height="12" viewBox="0 0 12 12"><path d="M6,0.8 V11.2 M0.8,6 H11.2" stroke="#111" stroke-width="3.8"/><path d="M6,1.6 V10.4 M1.6,6 H10.4" stroke="#fff" stroke-width="2"/></svg>
<div style="left:567px;top:1123px;width:20px;height:20px;background:linear-gradient(#a8a8a8,#989898);border:1px solid #1a1a1a;border-radius:0 4px 4px 0;"></div><svg style="position:absolute;left:571px;top:1126px;" width="12" height="12" viewBox="0 0 12 12"><path d="M1.8,1.8 L10.2,10.2 M10.2,1.8 L1.8,10.2" stroke="#111" stroke-width="3.8"/><path d="M2.4,2.4 L9.6,9.6 M9.6,2.4 L2.4,9.6" stroke="#fff" stroke-width="2"/></svg>
<div style="left:599px;top:1126px;width:14px;height:14px;background:linear-gradient(#3a3a3a,#4e4e4e);border:1px solid #1a1a1a;border-radius:3px"></div>
<svg style="position:absolute;left:600px;top:1124px;" width="14" height="14" viewBox="0 0 14 14"><path d="M2.5,7 L5.5,10.5 L12,2" stroke="#111" stroke-width="3" fill="none"/><path d="M2.5,7 L5.5,10.5 L12,2" stroke="#fff" stroke-width="1.5" fill="none"/></svg>
<div class="t" style="left:621px;top:1127px;color:#fff;font-size:11px;">Use Nodes</div>
<div style="left:688px;top:1123px;width:20px;height:20px;background:linear-gradient(#a8a8a8,#989898);border:1px solid #1a1a1a;border-radius:4px"></div>
<svg style="position:absolute;left:690px;top:1125px;" width="16" height="16" viewBox="0 0 16 16"><path d="M2,14 L7,9" stroke="#111" stroke-width="1.5"/><path d="M5,7 L9,11 L11,9 L10,7 L13,4 L14,5 L15,4 L12,1 L11,2 L12,3 L9,6 L7,5 Z" fill="#eee" stroke="#111" stroke-width="0.8"/></svg>
<div style="left:713px;top:1123px;width:20px;height:20px;background:linear-gradient(#8e8e8e,#848484);border:1px solid #555;border-radius:4px"></div>
<svg style="position:absolute;left:716px;top:1125px;" width="15" height="15" viewBox="0 0 15 15"><path d="M4,13 V5 L7.5,1.5 L11,5 M4,5 H7 M9,13 H13" stroke="#666" stroke-width="1.6" fill="none"/></svg>
<div style="left:749px;top:1123px;width:20px;height:20px;background:linear-gradient(#545454,#3f3f3f);border:1px solid #161616;border-radius:4px;"></div>
<svg style="position:absolute;left:751px;top:1125px;" width="16" height="16" viewBox="0 0 16 16"><rect x="4" y="1" width="8" height="6" fill="#eee" stroke="#111" stroke-width="0.8"/><path d="M1,8 L5,12 H11 L15,8" stroke="#4a7cd0" stroke-width="1.4" fill="none"/><rect x="2" y="11" width="4" height="3.5" fill="#eee" stroke="#111" stroke-width="0.7"/><rect x="10" y="11" width="4" height="3.5" fill="#eee" stroke="#111" stroke-width="0.7"/></svg>
<div style="left:774px;top:1123px;width:20px;height:20px;background:linear-gradient(#a8a8a8,#989898);border:1px solid #1a1a1a;border-radius:4px 0 0 4px"></div>
<svg style="position:absolute;left:777px;top:1125px;" width="15" height="15" viewBox="0 0 15 15"><path d="M4,12 L2,9 C0,5 4,1 8,3 L12,7 L10,9 L6,5 C5,4 3,5 4,7 L6,10 Z" fill="#d8d8d8" stroke="#555" stroke-width="0.8"/></svg>
<div style="left:793px;top:1123px;width:33px;height:20px;background:linear-gradient(#474747,#3a3a3a);border:1px solid #1a1a1a;border-radius:0 4px 4px 0"></div>
<svg style="position:absolute;left:795px;top:1125px;" width="16" height="15" viewBox="0 0 16 15"><circle cx="6" cy="4.5" r="3" fill="#4a88e0" stroke="#fff" stroke-width="1"/><path d="M2,9 H14 M2,12 H14 M6,7 V15 M10,7 V15" stroke="#fff" stroke-width="1.1"/></svg>
<svg style="position:absolute;left:815px;top:1126px;" width="7" height="14" viewBox="0 0 7 14"><path d="M0.5,5.5 L3.5,0.5 L6.5,5.5 Z M0.5,8.5 L3.5,13.5 L6.5,8.5 Z" fill="#c8c8c8"/></svg>
<div style="left:831px;top:1123px;width:39px;height:20px;background:linear-gradient(#545454,#3f3f3f);border:1px solid #161616;border-radius:4px;"></div>
<div style="left:831px;top:1123px;width:39px;height:20px;background:linear-gradient(#a8a8a8,#989898);border:1px solid #1a1a1a;border-radius:4px"></div>
<div style="left:850px;top:1123px;width:1px;height:20px;background:#1a1a1a"></div>
<svg style="position:absolute;left:833px;top:1125px;" width="16" height="16" viewBox="0 0 16 16"><rect x="5" y="2" width="9" height="11" fill="#e8d8a0" stroke="#111" stroke-width="0.8"/><path d="M1,15 L7,9 M3,9 H7 V13" stroke="#111" stroke-width="1.4" fill="none"/></svg>
<svg style="position:absolute;left:852px;top:1125px;" width="16" height="16" viewBox="0 0 16 16"><rect x="2" y="2" width="9" height="11" fill="#e8d8a0" stroke="#111" stroke-width="0.8"/><path d="M8,9 L14,15 M10,15 H14 V11" stroke="#111" stroke-width="1.4" fill="none"/></svg>
<svg style="position:absolute;left:0px;top:1132px;" width="12" height="13" viewBox="0 0 12 13"><path d="M0,3 L10,13 M0,7 L6,13 M0,11 L2,13" stroke="#a0a0a0" stroke-width="1"/><path d="M0,2 L11,13 M0,6 L7,13 M0,10 L3,13" stroke="#222" stroke-width="0.7"/></svg></body></html>
